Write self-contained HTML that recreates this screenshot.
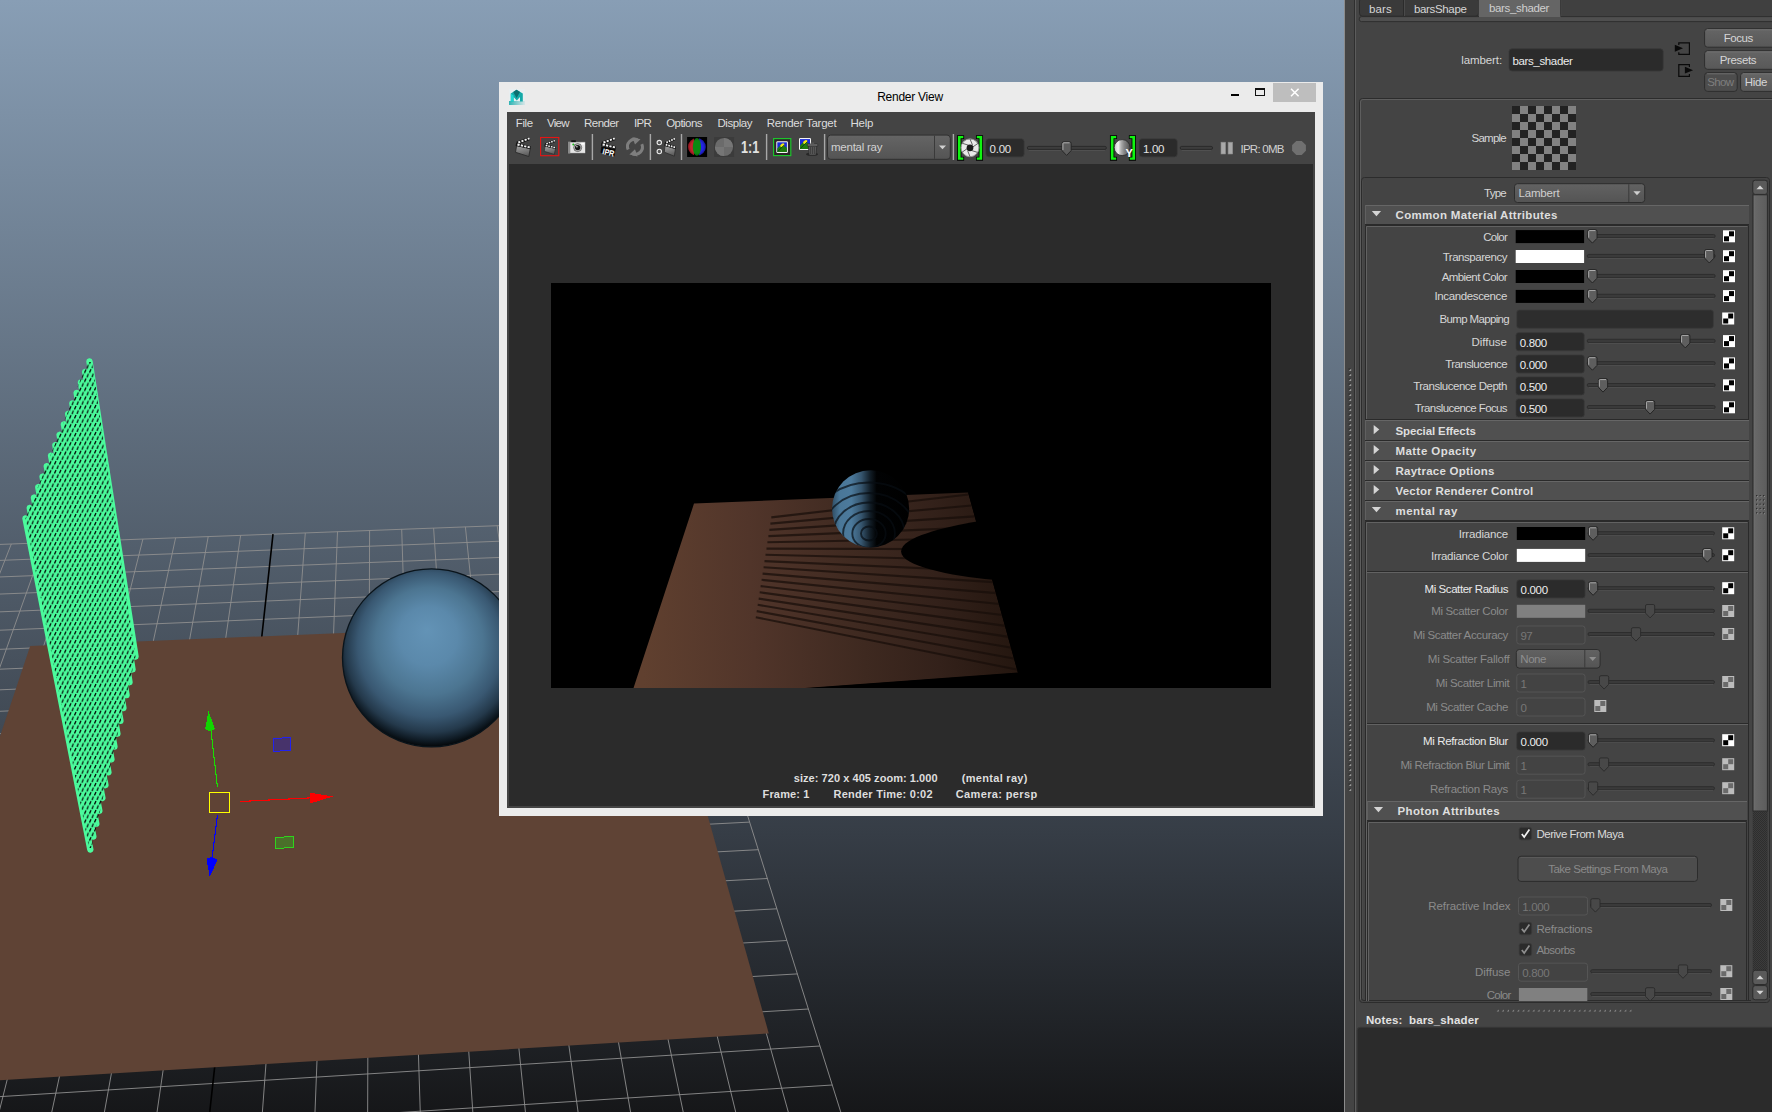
<!DOCTYPE html>
<html><head><meta charset="utf-8"><title>Render View</title>
<style>
html,body{margin:0;padding:0}
body{width:1772px;height:1112px;overflow:hidden;position:relative;background:#444;font-family:"Liberation Sans",sans-serif;font-size:11.5px}
.t{position:absolute;white-space:nowrap;font-size:11.5px;letter-spacing:-0.35px;line-height:14px;height:14px}
svg{display:block}
</style></head><body>
<svg id="vp" width="1345" height="1112" viewBox="0 0 1345 1112" style="position:absolute;left:0;top:0">
<defs>
<linearGradient id="bg" x1="0" y1="0" x2="0" y2="1"><stop offset="0" stop-color="#889eb5"/><stop offset="0.75" stop-color="#363d46"/><stop offset="1" stop-color="#161719"/></linearGradient>
<radialGradient id="sph" cx="431" cy="650" r="97.5" fx="427" fy="630" gradientUnits="userSpaceOnUse">
<stop offset="0" stop-color="#6393b6"/><stop offset="0.3" stop-color="#5b89ab"/><stop offset="0.55" stop-color="#4c7591"/><stop offset="0.74" stop-color="#395872"/><stop offset="0.87" stop-color="#24394b"/><stop offset="0.95" stop-color="#0e1922"/><stop offset="1" stop-color="#020405"/></radialGradient>
<pattern id="dash" width="5" height="9" patternUnits="userSpaceOnUse" patternTransform="skewY(-3)"><path d="M3.4,0.5L2,3.9M0.9,5L-0.5,8.4M5.9,5L4.5,8.4" stroke="#000" stroke-width="1.2"/></pattern>
<clipPath id="barclip"><polygon points="87.5,362 92,362 135.5,657 91.5,848 89,848 25.5,518.5"/></clipPath>
</defs>
<rect width="1345" height="1112" fill="url(#bg)"/>
<path d="M-121.9,549.0 L-476.6,1212.7 M-88.4,547.8 L-418.3,1208.9 M-55.1,546.5 L-360.4,1205.1 M-21.9,545.3 L-302.7,1201.3 M11.3,544.0 L-245.3,1197.6 M44.3,542.8 L-188.3,1193.8 M77.3,541.5 L-131.5,1190.1 M110.1,540.3 L-74.9,1186.4 M142.9,539.1 L-18.7,1182.7 M175.6,537.8 L37.3,1179.1 M208.2,536.6 L93.0,1175.4 M240.6,535.4 L148.4,1171.8 M305.3,533.0 L258.5,1164.6 M337.5,531.7 L313.1,1161.0 M369.6,530.5 L367.5,1157.4 M401.7,529.3 L421.6,1153.9 M433.6,528.1 L475.4,1150.4 M465.4,526.9 L529.0,1146.9 M497.2,525.7 L582.4,1143.4 M528.8,524.5 L635.4,1139.9 M560.4,523.4 L688.3,1136.4 M591.9,522.2 L740.8,1133.0 M623.3,521.0 L793.2,1129.6 M654.6,519.8 L845.2,1126.2 M-121.9,549.0 L654.6,519.8 M-130.6,565.4 L659.4,535.1 M-139.7,582.4 L664.4,551.0 M-149.1,600.0 L669.6,567.4 M-158.9,618.3 L674.9,584.4 M-169.0,637.2 L680.5,602.1 M-179.5,656.9 L686.2,620.4 M-190.5,677.4 L692.2,639.4 M-201.9,698.7 L698.4,659.1 M-213.7,720.9 L704.8,679.6 M-226.1,744.0 L711.5,701.0 M-239.0,768.1 L718.5,723.2 M-266.5,819.6 L733.4,770.5 M-281.2,847.1 L741.3,795.7 M-296.6,875.9 L749.6,822.1 M-312.7,906.1 L758.3,849.7 M-329.7,937.8 L767.4,878.5 M-347.4,971.1 L776.9,908.8 M-366.2,1006.2 L786.9,940.5 M-385.9,1043.1 L797.4,973.9 M-406.7,1082.0 L808.4,1009.0 M-428.7,1123.1 L820.0,1046.0 M-451.9,1166.6 L832.3,1085.0 M-476.6,1212.7 L845.2,1126.2" stroke="#8f8f8f" stroke-width="0.9" fill="none"/>
<path d="M273.0,534.2 L203.6,1168.2 M-252.4,793.3 L725.8,746.4" stroke="#000" stroke-width="1.6" fill="none"/>
<polygon points="30.2,646.1 652.7,619.9 768.8,1033.4 -117.6,1087.5" fill="#5f4335"/>
<ellipse cx="431.5" cy="657.8" rx="89" ry="89" fill="url(#sph)" stroke="#0a141b" stroke-width="1.3"/>
<path d="M89.5,361.5 L135.5,656.5 M85.2,372.0 L132.5,669.4 M81.0,382.4 L129.5,682.2 M76.7,392.9 L126.5,695.1 M72.4,403.4 L123.4,708.0 M68.2,413.8 L120.4,720.8 M63.9,424.3 L117.4,733.7 M59.6,434.8 L114.4,746.6 M55.4,445.2 L111.4,759.4 M51.1,455.7 L108.4,772.3 M46.8,466.2 L105.4,785.2 M42.6,476.6 L102.4,798.0 M38.3,487.1 L99.3,810.9 M34.0,497.6 L96.3,823.8 M29.8,508.0 L93.3,836.6 M25.5,518.5 L90.3,849.5" stroke="#4bfb9c" stroke-width="6.4" stroke-linecap="round" fill="none"/>
<rect x="20" y="355" width="122" height="500" fill="url(#dash)" clip-path="url(#barclip)"/>
<g fill="none" stroke-width="1.1" shape-rendering="crispEdges">
<path d="M217.4,786.7 L211,731" stroke="#19e000"/>
<path d="M208.4,711 L205.2,729 Q210,733 215,729 Z" fill="#12d400" stroke="none"/>
<path d="M240.2,801.5 L310.4,797.9" stroke="#ff0000"/>
<path d="M332.9,796.5 L310.2,792.6 L310.4,803.4 Z" fill="#ff0000" stroke="none"/>
<path d="M217.4,815 L212,859" stroke="#0000ff"/>
<path d="M209.7,876.5 L206.5,859 Q212,855 217.6,860 Z" fill="#0000ff" stroke="none"/>
<rect x="209.5" y="792.5" width="20" height="20" stroke="#ffff00" stroke-width="1"/>
<path d="M273.5,738.5 L290.5,737.5 L290.8,750.5 L274,751.3 Z" fill="#47336b" stroke="#2222ee" stroke-width="1"/>
<path d="M276,837.5 L293,836.5 L293,847.5 L275.5,848.5 Z" fill="#4a702a" stroke="#2fd41c" stroke-width="1"/>
</g>
</svg>
<div id="rv" style="position:absolute;left:499px;top:82px;width:824px;height:734px;background:#ebebeb"></div>
<div style="position:absolute;left:760px;top:89px;width:300px;height:16px;line-height:16px;text-align:center;font-size:12px;letter-spacing:-0.25px;color:#000">Render View</div>
<div style="position:absolute;left:1273px;top:83px;width:43px;height:19px;background:#bebebe"></div>
<div style="position:absolute;left:507px;top:112px;width:808px;height:696px;background:#444"></div>
<div style="position:absolute;left:509px;top:164px;width:804px;height:642px;background:#2b2b2b"></div>
<div class="t" style="left:515.8px;top:116px;color:#dcdcdc;letter-spacing:-0.43px;">File</div>
<div class="t" style="left:547.1px;top:116px;color:#dcdcdc;letter-spacing:-0.75px;">View</div>
<div class="t" style="left:584.0px;top:116px;color:#dcdcdc;letter-spacing:-0.52px;">Render</div>
<div class="t" style="left:634.1px;top:116px;color:#dcdcdc;letter-spacing:-0.75px;">IPR</div>
<div class="t" style="left:666.2px;top:116px;color:#dcdcdc;letter-spacing:-0.55px;">Options</div>
<div class="t" style="left:717.5px;top:116px;color:#dcdcdc;letter-spacing:-0.45px;">Display</div>
<div class="t" style="left:766.8px;top:116px;color:#dcdcdc;letter-spacing:-0.23px;">Render Target</div>
<div class="t" style="left:850.6px;top:116px;color:#dcdcdc;letter-spacing:-0.30px;">Help</div>
<svg width="824" height="734" viewBox="499 82 824 734" style="position:absolute;left:499px;top:82px">
<defs>
<linearGradient id="clg" x1="0" y1="0" x2="0.3" y2="1"><stop offset="0" stop-color="#a4a4a4"/><stop offset="1" stop-color="#5e5e5e"/></linearGradient>
<linearGradient id="pl" x1="640" y1="590" x2="1010" y2="575" gradientUnits="userSpaceOnUse"><stop offset="0" stop-color="#60402f"/><stop offset="0.3" stop-color="#51352a"/><stop offset="0.6" stop-color="#3e2920"/><stop offset="0.8" stop-color="#33211a"/><stop offset="1" stop-color="#251710"/></linearGradient>
<linearGradient id="sp2" x1="832" y1="0" x2="909" y2="0" gradientUnits="userSpaceOnUse"><stop offset="0" stop-color="#2f4d64"/><stop offset="0.1" stop-color="#4a7798"/><stop offset="0.25" stop-color="#4c7a9c"/><stop offset="0.38" stop-color="#36566f"/><stop offset="0.5" stop-color="#111c25"/><stop offset="0.58" stop-color="#010203"/><stop offset="1" stop-color="#000"/></linearGradient>
<radialGradient id="rgbsh" cx="0.5" cy="0.5" r="0.5"><stop offset="0.7" stop-color="#000" stop-opacity="0"/><stop offset="1" stop-color="#000" stop-opacity="0.32"/></radialGradient>
<linearGradient id="ddg" x1="0" y1="0" x2="0" y2="1"><stop offset="0" stop-color="#656565"/><stop offset="1" stop-color="#545454"/></linearGradient>
<linearGradient id="ysp" x1="0" y1="0" x2="1" y2="0"><stop offset="0" stop-color="#c4c4c4"/><stop offset="0.25" stop-color="#f2f2f2"/><stop offset="0.42" stop-color="#b0b0b0"/><stop offset="0.62" stop-color="#868686"/><stop offset="0.82" stop-color="#6a6a6a"/><stop offset="1" stop-color="#474747"/></linearGradient>
<linearGradient id="tig" x1="0" y1="0" x2="1" y2="0"><stop offset="0" stop-color="#2fb3b3"/><stop offset="1" stop-color="#d8e6e8"/></linearGradient>
<clipPath id="ballc"><circle cx="696.9" cy="146.9" r="8.8"/></clipPath>
<clipPath id="sphc"><circle cx="870.6" cy="508.8" r="38.6"/></clipPath>
<clipPath id="imgc"><rect x="551" y="283" width="720" height="405"/></clipPath>
</defs>
<g><rect x="509" y="89" width="16" height="16" fill="#e8eef0"/><rect x="509" y="101" width="16" height="4" fill="url(#tig)"/>
<path d="M510.8,101.5 L510.8,93.5 L516.5,89.8 L522.8,93.5 L522.8,101.5 L520,101.5 L520,97 L516.8,100.5 L513.6,97 L513.6,101.5 Z" fill="#14a9a8"/>
<path d="M510.8,93.5 L513.6,95.5 L513.6,101.5 L510.8,101.5 Z" fill="#22d6d2"/>
<path d="M513.3,92 L516.6,98 L520,92 L516.5,89.8 Z" fill="#0b6f70"/></g>
<rect x="1231" y="94" width="8" height="2" fill="#000"/>
<path d="M1255,88 h10 v8 h-10 Z M1256,90 v5 h8 v-5 Z" fill="#111" fill-rule="evenodd"/>
<path d="M1291,88.7 L1298.6,96.3 M1298.6,88.7 L1291,96.3" stroke="#fff" stroke-width="1.5"/>
<g transform="translate(515.2,136.9) scale(1.0)">
<path d="M1.4,8.8 L15.2,11.2 L13.6,19.6 L0.3,15.4 Z" fill="url(#clg)" stroke="#2a2a2a" stroke-width="0.9"/>
<path d="M1.2,4.9 L14,0.2 L15,3 L2.2,7.6 Z" fill="#151515"/>
<path d="M1,5.8 L15.6,9.4 L15,12.3 L0.4,8.8 Z" fill="#151515"/>
<g fill="#f4f4f4"><rect x="3" y="4.3" width="2.1" height="1.9" transform="rotate(-20 4 5.2)"/><rect x="6.2" y="3.1" width="2.1" height="1.9" transform="rotate(-20 7.2 4)"/><rect x="9.4" y="1.9" width="2.1" height="1.9" transform="rotate(-20 10.4 2.8)"/><rect x="12.5" y="0.8" width="1.9" height="1.9" transform="rotate(-20 13.4 1.7)"/>
<rect x="2.2" y="6.9" width="2.2" height="1.9" transform="rotate(14 3.3 7.8)"/><rect x="5.6" y="7.7" width="2.2" height="1.9" transform="rotate(14 6.7 8.6)"/><rect x="9" y="8.5" width="2.2" height="1.9" transform="rotate(14 10.1 9.4)"/><rect x="12.4" y="9.3" width="2.2" height="1.9" transform="rotate(14 13.4 10.2)"/></g>
</g>
<rect x="540.6" y="137.5" width="18.2" height="18.2" fill="none" stroke="#e61414" stroke-width="1.1"/>
<g transform="translate(544,139.6) scale(0.76)">
<path d="M1.4,8.8 L15.2,11.2 L13.6,19.6 L0.3,15.4 Z" fill="url(#clg)" stroke="#2a2a2a" stroke-width="0.9"/>
<path d="M1.2,4.9 L14,0.2 L15,3 L2.2,7.6 Z" fill="#151515"/>
<path d="M1,5.8 L15.6,9.4 L15,12.3 L0.4,8.8 Z" fill="#151515"/>
<g fill="#f4f4f4"><rect x="3" y="4.3" width="2.1" height="1.9" transform="rotate(-20 4 5.2)"/><rect x="6.2" y="3.1" width="2.1" height="1.9" transform="rotate(-20 7.2 4)"/><rect x="9.4" y="1.9" width="2.1" height="1.9" transform="rotate(-20 10.4 2.8)"/><rect x="12.5" y="0.8" width="1.9" height="1.9" transform="rotate(-20 13.4 1.7)"/>
<rect x="2.2" y="6.9" width="2.2" height="1.9" transform="rotate(14 3.3 7.8)"/><rect x="5.6" y="7.7" width="2.2" height="1.9" transform="rotate(14 6.7 8.6)"/><rect x="9" y="8.5" width="2.2" height="1.9" transform="rotate(14 10.1 9.4)"/><rect x="12.4" y="9.3" width="2.2" height="1.9" transform="rotate(14 13.4 10.2)"/></g>
</g>
<g><rect x="568" y="141.8" width="17.6" height="11.6" rx="0.8" fill="#e6e6e6" stroke="#3a3a3a" stroke-width="0.7"/>
<rect x="568" y="141.8" width="2.3" height="11.6" fill="#8a8a8a"/><rect x="571.3" y="140.3" width="4.5" height="1.8" fill="#111"/>
<rect x="581.2" y="142.8" width="3" height="1.8" fill="#fff"/>
<circle cx="577.7" cy="147.6" r="4" fill="#bdbdbd" stroke="#333" stroke-width="0.6"/><circle cx="577.7" cy="147.6" r="2.7" fill="#151515"/><circle cx="576.9" cy="146.8" r="0.8" fill="#ddd"/>
<circle cx="573.3" cy="144.4" r="1" fill="#19b819"/></g>
<rect x="591.6999999999999" y="134" width="1.4" height="26" fill="#a8a8a8"/>
<rect x="649.6999999999999" y="134" width="1.4" height="26" fill="#a8a8a8"/>
<rect x="680.8" y="134" width="1.4" height="26" fill="#a8a8a8"/>
<rect x="765.9" y="134" width="1.4" height="26" fill="#a8a8a8"/>
<rect x="823.9" y="134" width="1.4" height="26" fill="#a8a8a8"/>
<rect x="952.6999999999999" y="134" width="1.4" height="26" fill="#a8a8a8"/>
<g transform="translate(600.4,136.9) scale(1.0)">
<path d="M1.4,8.8 L15.2,11.2 L13.6,19.6 L0.3,15.4 Z" fill="url(#clg)" stroke="#2a2a2a" stroke-width="0.9"/>
<path d="M1.2,4.9 L14,0.2 L15,3 L2.2,7.6 Z" fill="#151515"/>
<path d="M1,5.8 L15.6,9.4 L15,12.3 L0.4,8.8 Z" fill="#151515"/>
<g fill="#f4f4f4"><rect x="3" y="4.3" width="2.1" height="1.9" transform="rotate(-20 4 5.2)"/><rect x="6.2" y="3.1" width="2.1" height="1.9" transform="rotate(-20 7.2 4)"/><rect x="9.4" y="1.9" width="2.1" height="1.9" transform="rotate(-20 10.4 2.8)"/><rect x="12.5" y="0.8" width="1.9" height="1.9" transform="rotate(-20 13.4 1.7)"/>
<rect x="2.2" y="6.9" width="2.2" height="1.9" transform="rotate(14 3.3 7.8)"/><rect x="5.6" y="7.7" width="2.2" height="1.9" transform="rotate(14 6.7 8.6)"/><rect x="9" y="8.5" width="2.2" height="1.9" transform="rotate(14 10.1 9.4)"/><rect x="12.4" y="9.3" width="2.2" height="1.9" transform="rotate(14 13.4 10.2)"/></g>
</g>
<path d="M601.6,146.2 L615.4,149 L614.2,156.6 L600.6,152.8 Z" fill="#080808"/>
<text x="602" y="154" font-family="Liberation Sans, sans-serif" font-weight="bold" font-size="8.4" fill="#fff" transform="rotate(13 602 154)" textLength="12" lengthAdjust="spacingAndGlyphs">IPR</text>
<g fill="none" stroke="#7e7e7e" stroke-width="3"><path d="M628.2,149.5 A7.2,7.2 0 0 1 637.5,139.8"/><path d="M641.8,144.2 A7.2,7.2 0 0 1 632.5,153.8"/></g>
<path d="M632.3,137.2 L640.5,139.2 L635,144.5 Z" fill="#7e7e7e"/><path d="M637.6,156.5 L629.4,154.6 L635,149.2 Z" fill="#7e7e7e"/>
<circle cx="659.3" cy="142.6" r="2.2" fill="#555" stroke="#ececec" stroke-width="1.1"/><circle cx="659.3" cy="151.5" r="2.2" fill="#555" stroke="#ececec" stroke-width="1.1"/>
<g transform="translate(664,137.2) scale(0.76,0.97)">
<path d="M1.4,8.8 L15.2,11.2 L13.6,19.6 L0.3,15.4 Z" fill="url(#clg)" stroke="#2a2a2a" stroke-width="0.9"/>
<path d="M1.2,4.9 L14,0.2 L15,3 L2.2,7.6 Z" fill="#151515"/>
<path d="M1,5.8 L15.6,9.4 L15,12.3 L0.4,8.8 Z" fill="#151515"/>
<g fill="#f4f4f4"><rect x="3" y="4.3" width="2.1" height="1.9" transform="rotate(-20 4 5.2)"/><rect x="6.2" y="3.1" width="2.1" height="1.9" transform="rotate(-20 7.2 4)"/><rect x="9.4" y="1.9" width="2.1" height="1.9" transform="rotate(-20 10.4 2.8)"/><rect x="12.5" y="0.8" width="1.9" height="1.9" transform="rotate(-20 13.4 1.7)"/>
<rect x="2.2" y="6.9" width="2.2" height="1.9" transform="rotate(14 3.3 7.8)"/><rect x="5.6" y="7.7" width="2.2" height="1.9" transform="rotate(14 6.7 8.6)"/><rect x="9" y="8.5" width="2.2" height="1.9" transform="rotate(14 10.1 9.4)"/><rect x="12.4" y="9.3" width="2.2" height="1.9" transform="rotate(14 13.4 10.2)"/></g>
</g>
<rect x="687.1" y="137" width="20" height="20" fill="#000"/><g clip-path="url(#ballc)"><rect x="687" y="137" width="7" height="20" fill="#c5222c"/><rect x="699" y="137" width="8" height="20" fill="#2424e4"/><ellipse cx="696.9" cy="146.9" rx="4.1" ry="9" fill="#0b8a12"/><circle cx="696.9" cy="146.9" r="8.8" fill="url(#rgbsh)"/></g>
<rect x="714.1" y="137.1" width="20" height="19.8" fill="#3b3b3b"/><circle cx="724" cy="147" r="9.1" fill="#6b6b6b"/><path d="M724,147 L724,137.9 A9.1,9.1 0 0 1 733.1,147 Z M724,147 L724,156.1 A9.1,9.1 0 0 1 714.9,147 Z" fill="#767676"/>
<text x="741" y="153" font-family="Liberation Sans, sans-serif" font-weight="bold" font-size="16.5" fill="#e2e2e2" textLength="18.2" lengthAdjust="spacingAndGlyphs">1:1</text>
<rect x="773.6" y="138.6" width="17.2" height="17" fill="#2c2428" stroke="#1dc32b" stroke-width="1.2"/>
<g transform="translate(776.3,141.3)"><rect x="0" y="0" width="11.6" height="11.6" rx="1.2" fill="#f4f4f4"/><rect x="1" y="1" width="9.6" height="9.6" fill="#1a2ad8"/><path d="M1,10.6 L1,7.192 L5.22,2.9 L10.6,6.38 L10.6,10.6 Z" fill="#1f7a10"/><ellipse cx="6.032" cy="3.828" rx="2.32" ry="1.508" fill="#f0e814" transform="rotate(-35 6.032 3.828)"/><path d="M1.5,10.1 L8.12,3.48" stroke="#0c3a08" stroke-width="0.8"/></g>
<g transform="translate(799,138.1)"><rect x="0" y="0" width="12" height="11.8" rx="1.2" fill="#f4f4f4"/><rect x="1" y="1" width="10" height="9.8" fill="#1a2ad8"/><path d="M1,10.8 L1,7.316000000000001 L5.4,2.95 L11,6.490000000000001 L11,10.8 Z" fill="#1f7a10"/><ellipse cx="6.24" cy="3.8940000000000006" rx="2.4000000000000004" ry="1.5340000000000003" fill="#f0e814" transform="rotate(-35 6.24 3.8940000000000006)"/><path d="M1.5,10.3 L8.399999999999999,3.54" stroke="#0c3a08" stroke-width="0.8"/></g>
<g><ellipse cx="812" cy="154.3" rx="6" ry="1.8" fill="#262626"/><path d="M808.3,145.8 L816.8,145.8 L816,155.2 L809.1,155.2 Z" fill="#5a5a5a" stroke="#2a2a2a" stroke-width="0.7"/><rect x="807.2" y="143.9" width="10.7" height="2.2" rx="1" fill="#6e6e6e" stroke="#2a2a2a" stroke-width="0.6"/><rect x="810.8" y="142.4" width="3.4" height="1.6" fill="#555"/><path d="M810.6,147 V154 M812.5,147 V154 M814.4,147 V154" stroke="#333" stroke-width="0.7"/></g>
<rect x="827.5" y="135.1" width="122.8" height="24.2" rx="3.2" fill="url(#ddg)" stroke="#303030" stroke-width="1"/><path d="M934.5,135.6 V158.8" stroke="#3a3a3a" stroke-width="1"/><path d="M939,145.4 L946,145.4 L942.5,149.2 Z" fill="#d0d0d0"/>
<path d="M957.9,136 h5.4 v2.2 h-2.7 v19.4 h2.7 v2.2 h-5.4 Z M982.2,136 h-5.4 v2.2 h2.7 v19.4 h-2.7 v2.2 h5.4 Z" fill="#10f510" stroke="#000" stroke-width="1.7" paint-order="stroke" stroke-linejoin="miter"/>
<circle cx="970" cy="147.8" r="8.9" fill="#e9e9e9"/><circle cx="970" cy="147.8" r="8.9" fill="none" stroke="#9a9a9a" stroke-width="1"/>
<g stroke="#555" stroke-width="0.9"><path d="M970,139 L972.5,145"/><path d="M977.8,143.5 L972.8,147"/><path d="M977.6,152.4 L971.5,150.5"/><path d="M970,156.6 L967.6,150.6"/><path d="M962.2,152.2 L967.2,148.6"/><path d="M962.4,143.3 L968.5,145.2"/></g>
<circle cx="970" cy="147.8" r="3.4" fill="#1a1a1a"/>
<path d="M1110.8000000000002,136 h5.4 v2.2 h-2.7 v19.4 h2.7 v2.2 h-5.4 Z M1135.1000000000001,136 h-5.4 v2.2 h2.7 v19.4 h-2.7 v2.2 h5.4 Z" fill="#10f510" stroke="#000" stroke-width="1.7" paint-order="stroke" stroke-linejoin="miter"/>
<circle cx="1122.2" cy="147.6" r="8" fill="url(#ysp)" stroke="#262626" stroke-width="0.8"/>
<text x="1125.4" y="156.6" font-family="Liberation Sans, sans-serif" font-weight="bold" font-size="11" fill="#fff">Y</text>
<rect x="985.8" y="138.7" width="38.4" height="18.2" rx="3" fill="#2b2b2b" stroke="#3c3c3c" stroke-width="0.8"/>
<rect x="1139.1" y="138.7" width="38.2" height="18.2" rx="3" fill="#2b2b2b" stroke="#3c3c3c" stroke-width="0.8"/>
<rect x="1027.3" y="146.4" width="79.10000000000014" height="3" rx="1.5" fill="#3d3d3d" stroke="#272727" stroke-width="0.9"/><rect x="1028.8" y="150" width="76.10000000000014" height="0.7" fill="#565656"/>
<rect x="1180.2" y="146.4" width="32.399999999999864" height="3" rx="1.5" fill="#3d3d3d" stroke="#272727" stroke-width="0.9"/><rect x="1181.7" y="150" width="29.399999999999864" height="0.7" fill="#565656"/>
<path d="M1062,143.4 Q1062,141.9 1063.5,141.9 L1069.7,141.9 Q1071.2,141.9 1071.2,143.4 L1071.2,150.6 L1066.6,155.4 L1062,150.6 Z" fill="#5c5c5c" stroke="#222" stroke-width="0.9"/><path d="M1062.9,150 V143.6 Q1062.9,142.8 1063.8,142.8 H1069.6" fill="none" stroke="#bdbdbd" stroke-width="0.9"/>
<rect x="1221" y="142.2" width="4.6" height="11.8" fill="#a9a9a9" stroke="#8a8a8a" stroke-width="0.6"/><rect x="1228.1" y="142.2" width="4.6" height="11.8" fill="#a9a9a9" stroke="#8a8a8a" stroke-width="0.6"/>
<path d="M1296.3,141 L1301.7,141 L1305.9,145.1 L1305.9,150.7 L1301.7,154.9 L1296.3,154.9 L1292.1,150.7 L1292.1,145.1 Z" fill="#707070"/>
<rect x="551" y="283" width="720" height="405" fill="#000"/>
<g clip-path="url(#imgc)">
<path d="M694,503.6 L968.1,492.4 L992,579.4 L1018,672.9 L797,689 L633.2,689 Z" fill="url(#pl)"/>
<path d="M771.3,517.4 L968.6,494.5 M770.4,523.6 L971.7,505.5 M769.4,529.9 L974.8,516.4 M768.4,536.1 L977.9,527.4 M767.4,542.3 L981.0,538.3 M766.5,548.6 L984.1,549.3 M765.5,554.8 L987.1,560.2 M764.5,561.1 L990.2,571.2 M763.6,567.3 L993.3,582.1 M762.6,573.6 L996.4,593.1 M761.6,579.8 L999.5,604.0 M760.6,586.1 L1002.6,615.0 M759.7,592.3 L1005.6,625.9 M758.7,598.6 L1008.7,636.9 M757.7,604.8 L1011.8,647.8 M756.7,611.1 L1014.9,658.8 M755.8,617.3 L1018.0,669.8" stroke="#180e0a" stroke-opacity="0.72" stroke-width="2.1" fill="none"/>
<path d="M968.1,492.4 L1018,672.9 L1018,689 L1100,689 L1100,480 Z" fill="#000"/>
<path d="M797,688.6 L1018,672.6 L1030,690 Z" fill="#000"/>
<path d="M977,521.5 C945,527 901,537 901.1,551.6 C901.2,566 950,576 993,579.8 L1000,560 Z" fill="#000"/>
<circle cx="870.6" cy="508.8" r="38.6" fill="url(#sp2)"/>
<g clip-path="url(#sphc)" fill="none" stroke="#070d12" stroke-opacity="0.7" stroke-width="1.9">
<ellipse cx="869" cy="533.5" rx="8.0" ry="7.0"/>
<ellipse cx="869" cy="533.5" rx="16.7" ry="14.5"/>
<ellipse cx="869" cy="533.5" rx="25.9" ry="22.5"/>
<ellipse cx="869" cy="533.5" rx="35.6" ry="31.0"/>
<ellipse cx="869" cy="533.5" rx="46.6" ry="40.5"/>
<ellipse cx="869" cy="533.5" rx="58.6" ry="51.0"/>
</g>
</g>
</svg>
<div class="t" style="left:831px;top:140px;color:#d2d2d2;letter-spacing:-0.24px;">mental ray</div>
<div class="t" style="left:989.5px;top:142px;color:#e4e4e4;letter-spacing:-0.23px;">0.00</div>
<div class="t" style="left:1143px;top:142px;color:#e4e4e4;letter-spacing:-0.30px;">1.00</div>
<div class="t" style="left:1240.5px;top:142px;color:#d0d0d0;letter-spacing:-0.75px;">IPR: 0MB</div>
<div class="t" style="left:793.8px;top:771px;font-weight:bold;font-size:11px;color:#dedede;white-space:pre;letter-spacing:0.05px;">size: 720 x 405 zoom: 1.000</div>
<div class="t" style="left:961.8px;top:771px;font-weight:bold;font-size:11px;color:#dedede;white-space:pre;letter-spacing:0.30px;">(mental ray)</div>
<div class="t" style="left:762.6px;top:787px;font-weight:bold;font-size:11px;color:#dedede;white-space:pre;letter-spacing:0.14px;">Frame: 1</div>
<div class="t" style="left:833.5px;top:787px;font-weight:bold;font-size:11px;color:#dedede;white-space:pre;letter-spacing:0.24px;">Render Time: 0:02</div>
<div class="t" style="left:955.8px;top:787px;font-weight:bold;font-size:11px;color:#dedede;white-space:pre;letter-spacing:0.36px;">Camera: persp</div>
<div style="position:absolute;left:1345px;top:0;width:427px;height:1112px;background:#444"></div>
<svg width="432" height="1112" viewBox="1340 0 432 1112" style="position:absolute;left:1340px;top:0"><defs><linearGradient id="thg" x1="0" y1="0" x2="1" y2="0"><stop offset="0" stop-color="#6a6a6a"/><stop offset="1" stop-color="#5c5c5c"/></linearGradient><linearGradient id="btg" x1="0" y1="0" x2="0" y2="1"><stop offset="0" stop-color="#656565"/><stop offset="1" stop-color="#585858"/></linearGradient><linearGradient id="ddg2" x1="0" y1="0" x2="0" y2="1"><stop offset="0" stop-color="#626262"/><stop offset="1" stop-color="#545454"/></linearGradient><pattern id="hatch" width="2" height="2" patternUnits="userSpaceOnUse"><rect width="2" height="2" fill="#3c3c3c"/><rect width="1" height="1" fill="#2e2e2e"/><rect x="1" y="1" width="1" height="1" fill="#2e2e2e"/></pattern></defs><rect x="1344" y="0" width="1" height="1112" fill="#8c8c8c" />
<rect x="1354" y="0" width="1" height="1112" fill="#2f2f2f" />
<rect x="1355" y="0" width="1" height="1112" fill="#5c5c5c" />
<path d="M1348.4,368 h2.6 v2.6 h-2.6 Z" fill="#383838"/><path d="M1351.2,368.6 v2.4 h-2.4 Z" fill="#9a9a9a"/>
<path d="M1348.4,373 h2.6 v2.6 h-2.6 Z" fill="#383838"/><path d="M1351.2,373.6 v2.4 h-2.4 Z" fill="#9a9a9a"/>
<path d="M1348.4,378 h2.6 v2.6 h-2.6 Z" fill="#383838"/><path d="M1351.2,378.6 v2.4 h-2.4 Z" fill="#9a9a9a"/>
<path d="M1348.4,383 h2.6 v2.6 h-2.6 Z" fill="#383838"/><path d="M1351.2,383.6 v2.4 h-2.4 Z" fill="#9a9a9a"/>
<path d="M1348.4,388 h2.6 v2.6 h-2.6 Z" fill="#383838"/><path d="M1351.2,388.6 v2.4 h-2.4 Z" fill="#9a9a9a"/>
<path d="M1348.4,393 h2.6 v2.6 h-2.6 Z" fill="#383838"/><path d="M1351.2,393.6 v2.4 h-2.4 Z" fill="#9a9a9a"/>
<path d="M1348.4,398 h2.6 v2.6 h-2.6 Z" fill="#383838"/><path d="M1351.2,398.6 v2.4 h-2.4 Z" fill="#9a9a9a"/>
<path d="M1348.4,403 h2.6 v2.6 h-2.6 Z" fill="#383838"/><path d="M1351.2,403.6 v2.4 h-2.4 Z" fill="#9a9a9a"/>
<path d="M1348.4,408 h2.6 v2.6 h-2.6 Z" fill="#383838"/><path d="M1351.2,408.6 v2.4 h-2.4 Z" fill="#9a9a9a"/>
<path d="M1348.4,413 h2.6 v2.6 h-2.6 Z" fill="#383838"/><path d="M1351.2,413.6 v2.4 h-2.4 Z" fill="#9a9a9a"/>
<path d="M1348.4,418 h2.6 v2.6 h-2.6 Z" fill="#383838"/><path d="M1351.2,418.6 v2.4 h-2.4 Z" fill="#9a9a9a"/>
<path d="M1348.4,423 h2.6 v2.6 h-2.6 Z" fill="#383838"/><path d="M1351.2,423.6 v2.4 h-2.4 Z" fill="#9a9a9a"/>
<path d="M1348.4,428 h2.6 v2.6 h-2.6 Z" fill="#383838"/><path d="M1351.2,428.6 v2.4 h-2.4 Z" fill="#9a9a9a"/>
<path d="M1348.4,433 h2.6 v2.6 h-2.6 Z" fill="#383838"/><path d="M1351.2,433.6 v2.4 h-2.4 Z" fill="#9a9a9a"/>
<path d="M1348.4,438 h2.6 v2.6 h-2.6 Z" fill="#383838"/><path d="M1351.2,438.6 v2.4 h-2.4 Z" fill="#9a9a9a"/>
<path d="M1348.4,443 h2.6 v2.6 h-2.6 Z" fill="#383838"/><path d="M1351.2,443.6 v2.4 h-2.4 Z" fill="#9a9a9a"/>
<path d="M1348.4,448 h2.6 v2.6 h-2.6 Z" fill="#383838"/><path d="M1351.2,448.6 v2.4 h-2.4 Z" fill="#9a9a9a"/>
<path d="M1348.4,453 h2.6 v2.6 h-2.6 Z" fill="#383838"/><path d="M1351.2,453.6 v2.4 h-2.4 Z" fill="#9a9a9a"/>
<path d="M1348.4,458 h2.6 v2.6 h-2.6 Z" fill="#383838"/><path d="M1351.2,458.6 v2.4 h-2.4 Z" fill="#9a9a9a"/>
<path d="M1348.4,463 h2.6 v2.6 h-2.6 Z" fill="#383838"/><path d="M1351.2,463.6 v2.4 h-2.4 Z" fill="#9a9a9a"/>
<path d="M1348.4,468 h2.6 v2.6 h-2.6 Z" fill="#383838"/><path d="M1351.2,468.6 v2.4 h-2.4 Z" fill="#9a9a9a"/>
<path d="M1348.4,473 h2.6 v2.6 h-2.6 Z" fill="#383838"/><path d="M1351.2,473.6 v2.4 h-2.4 Z" fill="#9a9a9a"/>
<path d="M1348.4,478 h2.6 v2.6 h-2.6 Z" fill="#383838"/><path d="M1351.2,478.6 v2.4 h-2.4 Z" fill="#9a9a9a"/>
<path d="M1348.4,483 h2.6 v2.6 h-2.6 Z" fill="#383838"/><path d="M1351.2,483.6 v2.4 h-2.4 Z" fill="#9a9a9a"/>
<path d="M1348.4,488 h2.6 v2.6 h-2.6 Z" fill="#383838"/><path d="M1351.2,488.6 v2.4 h-2.4 Z" fill="#9a9a9a"/>
<path d="M1348.4,493 h2.6 v2.6 h-2.6 Z" fill="#383838"/><path d="M1351.2,493.6 v2.4 h-2.4 Z" fill="#9a9a9a"/>
<path d="M1348.4,498 h2.6 v2.6 h-2.6 Z" fill="#383838"/><path d="M1351.2,498.6 v2.4 h-2.4 Z" fill="#9a9a9a"/>
<path d="M1348.4,503 h2.6 v2.6 h-2.6 Z" fill="#383838"/><path d="M1351.2,503.6 v2.4 h-2.4 Z" fill="#9a9a9a"/>
<path d="M1348.4,508 h2.6 v2.6 h-2.6 Z" fill="#383838"/><path d="M1351.2,508.6 v2.4 h-2.4 Z" fill="#9a9a9a"/>
<path d="M1348.4,513 h2.6 v2.6 h-2.6 Z" fill="#383838"/><path d="M1351.2,513.6 v2.4 h-2.4 Z" fill="#9a9a9a"/>
<path d="M1348.4,518 h2.6 v2.6 h-2.6 Z" fill="#383838"/><path d="M1351.2,518.6 v2.4 h-2.4 Z" fill="#9a9a9a"/>
<path d="M1348.4,523 h2.6 v2.6 h-2.6 Z" fill="#383838"/><path d="M1351.2,523.6 v2.4 h-2.4 Z" fill="#9a9a9a"/>
<path d="M1348.4,528 h2.6 v2.6 h-2.6 Z" fill="#383838"/><path d="M1351.2,528.6 v2.4 h-2.4 Z" fill="#9a9a9a"/>
<path d="M1348.4,533 h2.6 v2.6 h-2.6 Z" fill="#383838"/><path d="M1351.2,533.6 v2.4 h-2.4 Z" fill="#9a9a9a"/>
<path d="M1348.4,538 h2.6 v2.6 h-2.6 Z" fill="#383838"/><path d="M1351.2,538.6 v2.4 h-2.4 Z" fill="#9a9a9a"/>
<path d="M1348.4,543 h2.6 v2.6 h-2.6 Z" fill="#383838"/><path d="M1351.2,543.6 v2.4 h-2.4 Z" fill="#9a9a9a"/>
<path d="M1348.4,548 h2.6 v2.6 h-2.6 Z" fill="#383838"/><path d="M1351.2,548.6 v2.4 h-2.4 Z" fill="#9a9a9a"/>
<path d="M1348.4,553 h2.6 v2.6 h-2.6 Z" fill="#383838"/><path d="M1351.2,553.6 v2.4 h-2.4 Z" fill="#9a9a9a"/>
<path d="M1348.4,558 h2.6 v2.6 h-2.6 Z" fill="#383838"/><path d="M1351.2,558.6 v2.4 h-2.4 Z" fill="#9a9a9a"/>
<path d="M1348.4,563 h2.6 v2.6 h-2.6 Z" fill="#383838"/><path d="M1351.2,563.6 v2.4 h-2.4 Z" fill="#9a9a9a"/>
<path d="M1348.4,568 h2.6 v2.6 h-2.6 Z" fill="#383838"/><path d="M1351.2,568.6 v2.4 h-2.4 Z" fill="#9a9a9a"/>
<path d="M1348.4,573 h2.6 v2.6 h-2.6 Z" fill="#383838"/><path d="M1351.2,573.6 v2.4 h-2.4 Z" fill="#9a9a9a"/>
<path d="M1348.4,578 h2.6 v2.6 h-2.6 Z" fill="#383838"/><path d="M1351.2,578.6 v2.4 h-2.4 Z" fill="#9a9a9a"/>
<path d="M1348.4,583 h2.6 v2.6 h-2.6 Z" fill="#383838"/><path d="M1351.2,583.6 v2.4 h-2.4 Z" fill="#9a9a9a"/>
<path d="M1348.4,588 h2.6 v2.6 h-2.6 Z" fill="#383838"/><path d="M1351.2,588.6 v2.4 h-2.4 Z" fill="#9a9a9a"/>
<path d="M1348.4,593 h2.6 v2.6 h-2.6 Z" fill="#383838"/><path d="M1351.2,593.6 v2.4 h-2.4 Z" fill="#9a9a9a"/>
<path d="M1348.4,598 h2.6 v2.6 h-2.6 Z" fill="#383838"/><path d="M1351.2,598.6 v2.4 h-2.4 Z" fill="#9a9a9a"/>
<path d="M1348.4,603 h2.6 v2.6 h-2.6 Z" fill="#383838"/><path d="M1351.2,603.6 v2.4 h-2.4 Z" fill="#9a9a9a"/>
<path d="M1348.4,608 h2.6 v2.6 h-2.6 Z" fill="#383838"/><path d="M1351.2,608.6 v2.4 h-2.4 Z" fill="#9a9a9a"/>
<path d="M1348.4,613 h2.6 v2.6 h-2.6 Z" fill="#383838"/><path d="M1351.2,613.6 v2.4 h-2.4 Z" fill="#9a9a9a"/>
<path d="M1348.4,618 h2.6 v2.6 h-2.6 Z" fill="#383838"/><path d="M1351.2,618.6 v2.4 h-2.4 Z" fill="#9a9a9a"/>
<path d="M1348.4,623 h2.6 v2.6 h-2.6 Z" fill="#383838"/><path d="M1351.2,623.6 v2.4 h-2.4 Z" fill="#9a9a9a"/>
<path d="M1348.4,628 h2.6 v2.6 h-2.6 Z" fill="#383838"/><path d="M1351.2,628.6 v2.4 h-2.4 Z" fill="#9a9a9a"/>
<path d="M1348.4,633 h2.6 v2.6 h-2.6 Z" fill="#383838"/><path d="M1351.2,633.6 v2.4 h-2.4 Z" fill="#9a9a9a"/>
<path d="M1348.4,638 h2.6 v2.6 h-2.6 Z" fill="#383838"/><path d="M1351.2,638.6 v2.4 h-2.4 Z" fill="#9a9a9a"/>
<path d="M1348.4,643 h2.6 v2.6 h-2.6 Z" fill="#383838"/><path d="M1351.2,643.6 v2.4 h-2.4 Z" fill="#9a9a9a"/>
<path d="M1348.4,648 h2.6 v2.6 h-2.6 Z" fill="#383838"/><path d="M1351.2,648.6 v2.4 h-2.4 Z" fill="#9a9a9a"/>
<path d="M1348.4,653 h2.6 v2.6 h-2.6 Z" fill="#383838"/><path d="M1351.2,653.6 v2.4 h-2.4 Z" fill="#9a9a9a"/>
<path d="M1348.4,658 h2.6 v2.6 h-2.6 Z" fill="#383838"/><path d="M1351.2,658.6 v2.4 h-2.4 Z" fill="#9a9a9a"/>
<path d="M1348.4,663 h2.6 v2.6 h-2.6 Z" fill="#383838"/><path d="M1351.2,663.6 v2.4 h-2.4 Z" fill="#9a9a9a"/>
<path d="M1348.4,668 h2.6 v2.6 h-2.6 Z" fill="#383838"/><path d="M1351.2,668.6 v2.4 h-2.4 Z" fill="#9a9a9a"/>
<path d="M1348.4,673 h2.6 v2.6 h-2.6 Z" fill="#383838"/><path d="M1351.2,673.6 v2.4 h-2.4 Z" fill="#9a9a9a"/>
<path d="M1348.4,678 h2.6 v2.6 h-2.6 Z" fill="#383838"/><path d="M1351.2,678.6 v2.4 h-2.4 Z" fill="#9a9a9a"/>
<path d="M1348.4,683 h2.6 v2.6 h-2.6 Z" fill="#383838"/><path d="M1351.2,683.6 v2.4 h-2.4 Z" fill="#9a9a9a"/>
<path d="M1348.4,688 h2.6 v2.6 h-2.6 Z" fill="#383838"/><path d="M1351.2,688.6 v2.4 h-2.4 Z" fill="#9a9a9a"/>
<path d="M1348.4,693 h2.6 v2.6 h-2.6 Z" fill="#383838"/><path d="M1351.2,693.6 v2.4 h-2.4 Z" fill="#9a9a9a"/>
<path d="M1348.4,698 h2.6 v2.6 h-2.6 Z" fill="#383838"/><path d="M1351.2,698.6 v2.4 h-2.4 Z" fill="#9a9a9a"/>
<path d="M1348.4,703 h2.6 v2.6 h-2.6 Z" fill="#383838"/><path d="M1351.2,703.6 v2.4 h-2.4 Z" fill="#9a9a9a"/>
<path d="M1348.4,708 h2.6 v2.6 h-2.6 Z" fill="#383838"/><path d="M1351.2,708.6 v2.4 h-2.4 Z" fill="#9a9a9a"/>
<path d="M1348.4,713 h2.6 v2.6 h-2.6 Z" fill="#383838"/><path d="M1351.2,713.6 v2.4 h-2.4 Z" fill="#9a9a9a"/>
<path d="M1348.4,718 h2.6 v2.6 h-2.6 Z" fill="#383838"/><path d="M1351.2,718.6 v2.4 h-2.4 Z" fill="#9a9a9a"/>
<path d="M1348.4,723 h2.6 v2.6 h-2.6 Z" fill="#383838"/><path d="M1351.2,723.6 v2.4 h-2.4 Z" fill="#9a9a9a"/>
<path d="M1348.4,728 h2.6 v2.6 h-2.6 Z" fill="#383838"/><path d="M1351.2,728.6 v2.4 h-2.4 Z" fill="#9a9a9a"/>
<path d="M1348.4,733 h2.6 v2.6 h-2.6 Z" fill="#383838"/><path d="M1351.2,733.6 v2.4 h-2.4 Z" fill="#9a9a9a"/>
<path d="M1348.4,738 h2.6 v2.6 h-2.6 Z" fill="#383838"/><path d="M1351.2,738.6 v2.4 h-2.4 Z" fill="#9a9a9a"/>
<path d="M1348.4,743 h2.6 v2.6 h-2.6 Z" fill="#383838"/><path d="M1351.2,743.6 v2.4 h-2.4 Z" fill="#9a9a9a"/>
<path d="M1348.4,748 h2.6 v2.6 h-2.6 Z" fill="#383838"/><path d="M1351.2,748.6 v2.4 h-2.4 Z" fill="#9a9a9a"/>
<path d="M1348.4,753 h2.6 v2.6 h-2.6 Z" fill="#383838"/><path d="M1351.2,753.6 v2.4 h-2.4 Z" fill="#9a9a9a"/>
<path d="M1348.4,758 h2.6 v2.6 h-2.6 Z" fill="#383838"/><path d="M1351.2,758.6 v2.4 h-2.4 Z" fill="#9a9a9a"/>
<path d="M1348.4,763 h2.6 v2.6 h-2.6 Z" fill="#383838"/><path d="M1351.2,763.6 v2.4 h-2.4 Z" fill="#9a9a9a"/>
<path d="M1348.4,768 h2.6 v2.6 h-2.6 Z" fill="#383838"/><path d="M1351.2,768.6 v2.4 h-2.4 Z" fill="#9a9a9a"/>
<path d="M1348.4,773 h2.6 v2.6 h-2.6 Z" fill="#383838"/><path d="M1351.2,773.6 v2.4 h-2.4 Z" fill="#9a9a9a"/>
<path d="M1348.4,778 h2.6 v2.6 h-2.6 Z" fill="#383838"/><path d="M1351.2,778.6 v2.4 h-2.4 Z" fill="#9a9a9a"/>
<path d="M1348.4,783 h2.6 v2.6 h-2.6 Z" fill="#383838"/><path d="M1351.2,783.6 v2.4 h-2.4 Z" fill="#9a9a9a"/>
<path d="M1348.4,788 h2.6 v2.6 h-2.6 Z" fill="#383838"/><path d="M1351.2,788.6 v2.4 h-2.4 Z" fill="#9a9a9a"/>
<rect x="1359.5" y="-2" width="119" height="18.2" fill="#3a3a3a" rx="3" stroke="#2b2b2b" stroke-width="1"/>
<rect x="1403" y="0" width="1" height="16" fill="#2b2b2b" />
<rect x="1404" y="0" width="1" height="16" fill="#4a4a4a" />
<rect x="1478.5" y="-3" width="82" height="20" fill="#656565" rx="3" stroke="#3a3a3a" stroke-width="1"/>
<rect x="1479" y="14" width="81" height="3.4" fill="#656565" />
<path d="M1775,17 V21.5 H1361.5 Q1359.2,21.5 1359.2,19.2 Q1359.2,17 1361.5,17 Z" fill="#4f4f4f"/>
<path d="M1561,16.6 H1775 M1775,21.6 H1361.5 Q1359.2,21.6 1359.2,19.1 Q1359.2,16.6 1361.5,16.6 H1479" fill="none" stroke="#2f2f2f" stroke-width="1"/>
<rect x="1561.5" y="0" width="215" height="16" fill="#404040" />
<rect x="1509" y="48.8" width="154.2" height="22.2" fill="#2b2b2b" rx="3" stroke="#393939" stroke-width="0.8"/>
<path d="M1678.8,45 V42.8 H1689.4 V54.4 H1678.8 V52.2" fill="none" stroke="#0a0a0a" stroke-width="1.2"/><path d="M1674.8,44.8 L1683,48.3 L1674.8,51.8 Z" fill="#0a0a0a"/>
<path d="M1689.4,67 V64.7 H1678.8 V76.3 H1689.4 V74" fill="none" stroke="#0a0a0a" stroke-width="1.2"/><path d="M1684.9,66.8 L1693.1,70.2 L1684.9,73.6 Z" fill="#0a0a0a"/>
<rect x="1704.6" y="28.6" width="80" height="18.6" fill="url(#btg)" rx="3" stroke="#2e2e2e" stroke-width="1"/>
<path d="M1707.1,29.8 H1782.1" stroke="#777" stroke-width="0.8"/>
<rect x="1704.6" y="50.7" width="80" height="18.6" fill="url(#btg)" rx="3" stroke="#2e2e2e" stroke-width="1"/>
<path d="M1707.1,51.900000000000006 H1782.1" stroke="#777" stroke-width="0.8"/>
<rect x="1704.6" y="72.6" width="32.6" height="18.8" fill="#4d4d4d" rx="3" stroke="#2e2e2e" stroke-width="1"/>
<path d="M1707.1,73.8 H1734.6999999999998" stroke="#777" stroke-width="0.8"/>
<rect x="1740.6" y="72.6" width="40" height="18.8" fill="url(#btg)" rx="3" stroke="#2e2e2e" stroke-width="1"/>
<path d="M1743.1,73.8 H1778.1" stroke="#777" stroke-width="0.8"/>
<path d="M1775,98.5 H1362.5 Q1359.5,98.5 1359.5,101.5 V999.5 Q1359.5,1002.5 1362.5,1002.5 H1766.5 Q1769.5,1002.5 1769.5,999.5" fill="none" stroke="#2c2c2c" stroke-width="1"/>
<path d="M1775,99.5 H1363 Q1360.5,99.5 1360.5,102 V999.5" fill="none" stroke="#5e5e5e" stroke-width="1"/>
<rect x="1512" y="106" width="64" height="64" fill="#222" />
<path d="M1520,106h8v8h-8ZM1536,106h8v8h-8ZM1552,106h8v8h-8ZM1568,106h8v8h-8ZM1512,114h8v8h-8ZM1528,114h8v8h-8ZM1544,114h8v8h-8ZM1560,114h8v8h-8ZM1520,122h8v8h-8ZM1536,122h8v8h-8ZM1552,122h8v8h-8ZM1568,122h8v8h-8ZM1512,130h8v8h-8ZM1528,130h8v8h-8ZM1544,130h8v8h-8ZM1560,130h8v8h-8ZM1520,138h8v8h-8ZM1536,138h8v8h-8ZM1552,138h8v8h-8ZM1568,138h8v8h-8ZM1512,146h8v8h-8ZM1528,146h8v8h-8ZM1544,146h8v8h-8ZM1560,146h8v8h-8ZM1520,154h8v8h-8ZM1536,154h8v8h-8ZM1552,154h8v8h-8ZM1568,154h8v8h-8ZM1512,162h8v8h-8ZM1528,162h8v8h-8ZM1544,162h8v8h-8ZM1560,162h8v8h-8Z" fill="#828282"/>
<path d="M1769.5,998 V180.5 Q1769.5,177.5 1766.5,177.5 H1364.5 Q1361.5,177.5 1361.5,180.5 V998.5 Q1361.5,1000.5 1364,1000.5 H1751" fill="none" stroke="#2c2c2c" stroke-width="1"/>
<rect x="1362" y="181" width="1" height="817" fill="#4a4a4a" />
<rect x="1752.6" y="180" width="15" height="820" fill="#3a3a3a" />
<rect x="1753" y="811" width="14.4" height="159" fill="url(#hatch)" />
<rect x="1753" y="194.8" width="14.4" height="616.2" fill="url(#thg)" stroke="#2c2c2c" stroke-width="1"/>
<rect x="1754" y="196" width="1" height="614" fill="#6c6c6c" />
<rect x="1756.0" y="495.0" width="1.3" height="1.3" fill="#2e2e2e"/><rect x="1757.0" y="496.0" width="1" height="1" fill="#8a8a8a"/>
<rect x="1759.5" y="495.0" width="1.3" height="1.3" fill="#2e2e2e"/><rect x="1760.5" y="496.0" width="1" height="1" fill="#8a8a8a"/>
<rect x="1763.0" y="495.0" width="1.3" height="1.3" fill="#2e2e2e"/><rect x="1764.0" y="496.0" width="1" height="1" fill="#8a8a8a"/>
<rect x="1756.0" y="499.3" width="1.3" height="1.3" fill="#2e2e2e"/><rect x="1757.0" y="500.3" width="1" height="1" fill="#8a8a8a"/>
<rect x="1759.5" y="499.3" width="1.3" height="1.3" fill="#2e2e2e"/><rect x="1760.5" y="500.3" width="1" height="1" fill="#8a8a8a"/>
<rect x="1763.0" y="499.3" width="1.3" height="1.3" fill="#2e2e2e"/><rect x="1764.0" y="500.3" width="1" height="1" fill="#8a8a8a"/>
<rect x="1756.0" y="503.6" width="1.3" height="1.3" fill="#2e2e2e"/><rect x="1757.0" y="504.6" width="1" height="1" fill="#8a8a8a"/>
<rect x="1759.5" y="503.6" width="1.3" height="1.3" fill="#2e2e2e"/><rect x="1760.5" y="504.6" width="1" height="1" fill="#8a8a8a"/>
<rect x="1763.0" y="503.6" width="1.3" height="1.3" fill="#2e2e2e"/><rect x="1764.0" y="504.6" width="1" height="1" fill="#8a8a8a"/>
<rect x="1756.0" y="507.9" width="1.3" height="1.3" fill="#2e2e2e"/><rect x="1757.0" y="508.9" width="1" height="1" fill="#8a8a8a"/>
<rect x="1759.5" y="507.9" width="1.3" height="1.3" fill="#2e2e2e"/><rect x="1760.5" y="508.9" width="1" height="1" fill="#8a8a8a"/>
<rect x="1763.0" y="507.9" width="1.3" height="1.3" fill="#2e2e2e"/><rect x="1764.0" y="508.9" width="1" height="1" fill="#8a8a8a"/>
<rect x="1756.0" y="512.2" width="1.3" height="1.3" fill="#2e2e2e"/><rect x="1757.0" y="513.2" width="1" height="1" fill="#8a8a8a"/>
<rect x="1759.5" y="512.2" width="1.3" height="1.3" fill="#2e2e2e"/><rect x="1760.5" y="513.2" width="1" height="1" fill="#8a8a8a"/>
<rect x="1763.0" y="512.2" width="1.3" height="1.3" fill="#2e2e2e"/><rect x="1764.0" y="513.2" width="1" height="1" fill="#8a8a8a"/>
<rect x="1752.8" y="180.2" width="14.6" height="14.2" fill="#5a5a5a" rx="2.5" stroke="#2c2c2c" stroke-width="1"/>
<path d="M1756.4,189.2 L1763.6,189.2 L1760,185.39999999999998 Z" fill="#d4d4d4"/>
<rect x="1752.8" y="970.3" width="14.6" height="14.2" fill="#5a5a5a" rx="2.5" stroke="#2c2c2c" stroke-width="1"/>
<path d="M1756.4,979.3 L1763.6,979.3 L1760,975.5 Z" fill="#d4d4d4"/>
<rect x="1752.8" y="985.6" width="14.6" height="14.2" fill="#5a5a5a" rx="2.5" stroke="#2c2c2c" stroke-width="1"/>
<path d="M1756.4,990.8000000000001 L1763.6,990.8000000000001 L1760,994.6 Z" fill="#d4d4d4"/>
<rect x="1514.5" y="183.7" width="130.2" height="18.8" fill="url(#ddg2)" rx="3" stroke="#2d2d2d" stroke-width="1"/>
<rect x="1628.3" y="184.2" width="1" height="17.80000000000001" fill="#3a3a3a" />
<path d="M1633.4,191.29999999999998 L1640.6,191.29999999999998 L1637.0,195.29999999999998 Z" fill="#cfcfcf"/>
<rect x="1365" y="205" width="384" height="19" fill="#505050" />
<rect x="1365" y="205" width="384" height="1" fill="#666666" />
<rect x="1365" y="205" width="1" height="19" fill="#606060" />
<rect x="1365" y="224" width="384" height="1" fill="#2a2a2a" />
<path d="M1371.8,210.9 h9.3 l-4.65,5.4 Z" fill="#d4d4d4"/>
<rect x="1365" y="420" width="384" height="20" fill="#505050" />
<rect x="1365" y="420" width="384" height="1" fill="#666666" />
<rect x="1365" y="420" width="1" height="20" fill="#606060" />
<rect x="1365" y="440" width="384" height="1" fill="#2a2a2a" />
<path d="M1373.7,424.90000000000003 v9.4 l5.6,-4.7 Z" fill="#d4d4d4"/>
<rect x="1365" y="441" width="384" height="19" fill="#505050" />
<rect x="1365" y="441" width="384" height="1" fill="#666666" />
<rect x="1365" y="441" width="1" height="19" fill="#606060" />
<rect x="1365" y="460" width="384" height="1" fill="#2a2a2a" />
<path d="M1373.7,444.90000000000003 v9.4 l5.6,-4.7 Z" fill="#d4d4d4"/>
<rect x="1365" y="461" width="384" height="19" fill="#505050" />
<rect x="1365" y="461" width="384" height="1" fill="#666666" />
<rect x="1365" y="461" width="1" height="19" fill="#606060" />
<rect x="1365" y="480" width="384" height="1" fill="#2a2a2a" />
<path d="M1373.7,464.90000000000003 v9.4 l5.6,-4.7 Z" fill="#d4d4d4"/>
<rect x="1365" y="481" width="384" height="19" fill="#505050" />
<rect x="1365" y="481" width="384" height="1" fill="#666666" />
<rect x="1365" y="481" width="1" height="19" fill="#606060" />
<rect x="1365" y="500" width="384" height="1" fill="#2a2a2a" />
<path d="M1373.7,484.90000000000003 v9.4 l5.6,-4.7 Z" fill="#d4d4d4"/>
<rect x="1365" y="501" width="384" height="19" fill="#505050" />
<rect x="1365" y="501" width="384" height="1" fill="#666666" />
<rect x="1365" y="501" width="1" height="19" fill="#606060" />
<rect x="1365" y="520" width="384" height="1" fill="#2a2a2a" />
<path d="M1371.8,506.90000000000003 h9.3 l-4.65,5.4 Z" fill="#d4d4d4"/>
<rect x="1367" y="801" width="380" height="19" fill="#505050" />
<rect x="1367" y="801" width="380" height="1" fill="#666666" />
<rect x="1367" y="801" width="1" height="19" fill="#606060" />
<rect x="1367" y="820" width="380" height="1" fill="#2a2a2a" />
<path d="M1373.8,806.9 h9.3 l-4.65,5.4 Z" fill="#d4d4d4"/>
<path d="M1365.5,419 V225.5 H1748.5 V419" fill="none" stroke="#2a2a2a" stroke-width="1"/>
<path d="M1366.5,419 V226.5 H1747.5" fill="none" stroke="#626262" stroke-width="1"/>
<rect x="1365" y="419" width="384" height="1" fill="#2a2a2a" />
<path d="M1365.5,1001 V521.5 H1748.5 V1001" fill="none" stroke="#2a2a2a" stroke-width="1"/>
<path d="M1366.5,1001 V522.5 H1747.5" fill="none" stroke="#626262" stroke-width="1"/>
<path d="M1367.5,1001 V821.5 H1746.5 V1001" fill="none" stroke="#2a2a2a" stroke-width="1"/>
<path d="M1368.5,1001 V822.5 H1745.5" fill="none" stroke="#626262" stroke-width="1"/>
<rect x="1367" y="571" width="381" height="1" fill="#2a2a2a" />
<rect x="1367" y="572" width="381" height="1" fill="#626262" />
<rect x="1367" y="723" width="381" height="1" fill="#2a2a2a" />
<rect x="1367" y="724" width="381" height="1" fill="#626262" />
<rect x="1515.7" y="230.1" width="68.4" height="13" fill="#000" />
<rect x="1587.2" y="234.5" width="128.0" height="3.2" fill="#3a3a3a" rx="1.6" stroke="#2b2b2b" stroke-width="0.9"/>
<rect x="1588.7" y="238.1" width="125.0" height="0.7" fill="#555" />
<path d="M1587.8000000000002,231.20000000000002 Q1587.8000000000002,229.70000000000002 1589.3000000000002,229.70000000000002 L1595.5000000000002,229.70000000000002 Q1597.0000000000002,229.70000000000002 1597.0000000000002,231.20000000000002 L1597.0000000000002,238.3 L1592.4,243.10000000000002 L1587.8000000000002,238.3 Z" fill="#5e5e5e" stroke="#1f1f1f" stroke-width="0.9"/>
<path d="M1588.7000000000003,237.70000000000002 V231.4 Q1588.7000000000003,230.60000000000002 1589.6000000000001,230.60000000000002 H1595.4" fill="none" stroke="#b4b4b4" stroke-width="0.9"/>
<rect x="1723" y="230.29999999999998" width="12" height="12" fill="#fff" />
<rect x="1729" y="231.29999999999998" width="5" height="5" fill="#000" />
<rect x="1724" y="236.29999999999998" width="5" height="5" fill="#000" />
<rect x="1515.7" y="250.0" width="68.4" height="13" fill="#fff" />
<rect x="1587.2" y="254.4" width="128.0" height="3.2" fill="#3a3a3a" rx="1.6" stroke="#2b2b2b" stroke-width="0.9"/>
<rect x="1588.7" y="258.0" width="125.0" height="0.7" fill="#555" />
<path d="M1704.7,251.10000000000002 Q1704.7,249.60000000000002 1706.2,249.60000000000002 L1712.4,249.60000000000002 Q1713.9,249.60000000000002 1713.9,251.10000000000002 L1713.9,258.20000000000005 L1709.3,263.0 L1704.7,258.20000000000005 Z" fill="#5e5e5e" stroke="#1f1f1f" stroke-width="0.9"/>
<path d="M1705.6000000000001,257.6 V251.3 Q1705.6000000000001,250.50000000000003 1706.5,250.50000000000003 H1712.3" fill="none" stroke="#b4b4b4" stroke-width="0.9"/>
<rect x="1723" y="250.2" width="12" height="12" fill="#fff" />
<rect x="1729" y="251.2" width="5" height="5" fill="#000" />
<rect x="1724" y="256.2" width="5" height="5" fill="#000" />
<rect x="1515.7" y="270.0" width="68.4" height="13" fill="#000" />
<rect x="1587.2" y="274.4" width="128.0" height="3.2" fill="#3a3a3a" rx="1.6" stroke="#2b2b2b" stroke-width="0.9"/>
<rect x="1588.7" y="277.99999999999994" width="125.0" height="0.7" fill="#555" />
<path d="M1587.8000000000002,271.09999999999997 Q1587.8000000000002,269.59999999999997 1589.3000000000002,269.59999999999997 L1595.5000000000002,269.59999999999997 Q1597.0000000000002,269.59999999999997 1597.0000000000002,271.09999999999997 L1597.0000000000002,278.2 L1592.4,282.99999999999994 L1587.8000000000002,278.2 Z" fill="#5e5e5e" stroke="#1f1f1f" stroke-width="0.9"/>
<path d="M1588.7000000000003,277.59999999999997 V271.29999999999995 Q1588.7000000000003,270.49999999999994 1589.6000000000001,270.49999999999994 H1595.4" fill="none" stroke="#b4b4b4" stroke-width="0.9"/>
<rect x="1723" y="270.2" width="12" height="12" fill="#fff" />
<rect x="1729" y="271.2" width="5" height="5" fill="#000" />
<rect x="1724" y="276.2" width="5" height="5" fill="#000" />
<rect x="1515.7" y="289.9" width="68.4" height="13" fill="#000" />
<rect x="1587.2" y="294.29999999999995" width="128.0" height="3.2" fill="#3a3a3a" rx="1.6" stroke="#2b2b2b" stroke-width="0.9"/>
<rect x="1588.7" y="297.8999999999999" width="125.0" height="0.7" fill="#555" />
<path d="M1587.8000000000002,290.99999999999994 Q1587.8000000000002,289.49999999999994 1589.3000000000002,289.49999999999994 L1595.5000000000002,289.49999999999994 Q1597.0000000000002,289.49999999999994 1597.0000000000002,290.99999999999994 L1597.0000000000002,298.09999999999997 L1592.4,302.8999999999999 L1587.8000000000002,298.09999999999997 Z" fill="#5e5e5e" stroke="#1f1f1f" stroke-width="0.9"/>
<path d="M1588.7000000000003,297.49999999999994 V291.19999999999993 Q1588.7000000000003,290.3999999999999 1589.6000000000001,290.3999999999999 H1595.4" fill="none" stroke="#b4b4b4" stroke-width="0.9"/>
<rect x="1723" y="290.09999999999997" width="12" height="12" fill="#fff" />
<rect x="1729" y="291.09999999999997" width="5" height="5" fill="#000" />
<rect x="1724" y="296.09999999999997" width="5" height="5" fill="#000" />
<rect x="1516.8" y="310" width="196.5" height="18.2" fill="#2d2d2d" rx="2.5" stroke="#3a3a3a" stroke-width="0.8"/>
<rect x="1722.2" y="312.5" width="12" height="12" fill="#fff" />
<rect x="1728.2" y="313.5" width="5" height="5" fill="#000" />
<rect x="1723.2" y="318.5" width="5" height="5" fill="#000" />
<rect x="1516" y="332.7" width="68.2" height="18" fill="#2b2b2b" rx="2.5" stroke="#383838" stroke-width="0.8"/>
<rect x="1587.2" y="339.3" width="128.0" height="3.2" fill="#3a3a3a" rx="1.6" stroke="#2b2b2b" stroke-width="0.9"/>
<rect x="1588.7" y="342.9" width="125.0" height="0.7" fill="#555" />
<path d="M1680.7,336.0 Q1680.7,334.5 1682.2,334.5 L1688.4,334.5 Q1689.9,334.5 1689.9,336.0 L1689.9,343.1 L1685.3,347.9 L1680.7,343.1 Z" fill="#5e5e5e" stroke="#1f1f1f" stroke-width="0.9"/>
<path d="M1681.6000000000001,342.5 V336.2 Q1681.6000000000001,335.4 1682.5,335.4 H1688.3" fill="none" stroke="#b4b4b4" stroke-width="0.9"/>
<rect x="1723" y="335.09999999999997" width="12" height="12" fill="#fff" />
<rect x="1729" y="336.09999999999997" width="5" height="5" fill="#000" />
<rect x="1724" y="341.09999999999997" width="5" height="5" fill="#000" />
<rect x="1516" y="355" width="68.2" height="18" fill="#2b2b2b" rx="2.5" stroke="#383838" stroke-width="0.8"/>
<rect x="1587.2" y="361.6" width="128.0" height="3.2" fill="#3a3a3a" rx="1.6" stroke="#2b2b2b" stroke-width="0.9"/>
<rect x="1588.7" y="365.2" width="125.0" height="0.7" fill="#555" />
<path d="M1587.8000000000002,358.3 Q1587.8000000000002,356.8 1589.3000000000002,356.8 L1595.5000000000002,356.8 Q1597.0000000000002,356.8 1597.0000000000002,358.3 L1597.0000000000002,365.40000000000003 L1592.4,370.2 L1587.8000000000002,365.40000000000003 Z" fill="#5e5e5e" stroke="#1f1f1f" stroke-width="0.9"/>
<path d="M1588.7000000000003,364.8 V358.5 Q1588.7000000000003,357.7 1589.6000000000001,357.7 H1595.4" fill="none" stroke="#b4b4b4" stroke-width="0.9"/>
<rect x="1723" y="357.4" width="12" height="12" fill="#fff" />
<rect x="1729" y="358.4" width="5" height="5" fill="#000" />
<rect x="1724" y="363.4" width="5" height="5" fill="#000" />
<rect x="1516" y="376.9" width="68.2" height="18" fill="#2b2b2b" rx="2.5" stroke="#383838" stroke-width="0.8"/>
<rect x="1587.2" y="383.5" width="128.0" height="3.2" fill="#3a3a3a" rx="1.6" stroke="#2b2b2b" stroke-width="0.9"/>
<rect x="1588.7" y="387.09999999999997" width="125.0" height="0.7" fill="#555" />
<path d="M1598.4,380.2 Q1598.4,378.7 1599.9,378.7 L1606.1000000000001,378.7 Q1607.6000000000001,378.7 1607.6000000000001,380.2 L1607.6000000000001,387.3 L1603.0,392.09999999999997 L1598.4,387.3 Z" fill="#5e5e5e" stroke="#1f1f1f" stroke-width="0.9"/>
<path d="M1599.3000000000002,386.7 V380.4 Q1599.3000000000002,379.59999999999997 1600.2,379.59999999999997 H1606.0" fill="none" stroke="#b4b4b4" stroke-width="0.9"/>
<rect x="1723" y="379.29999999999995" width="12" height="12" fill="#fff" />
<rect x="1729" y="380.29999999999995" width="5" height="5" fill="#000" />
<rect x="1724" y="385.29999999999995" width="5" height="5" fill="#000" />
<rect x="1516" y="398.9" width="68.2" height="18" fill="#2b2b2b" rx="2.5" stroke="#383838" stroke-width="0.8"/>
<rect x="1587.2" y="405.5" width="128.0" height="3.2" fill="#3a3a3a" rx="1.6" stroke="#2b2b2b" stroke-width="0.9"/>
<rect x="1588.7" y="409.09999999999997" width="125.0" height="0.7" fill="#555" />
<path d="M1645.5,402.2 Q1645.5,400.7 1647.0,400.7 L1653.2,400.7 Q1654.7,400.7 1654.7,402.2 L1654.7,409.3 L1650.1,414.09999999999997 L1645.5,409.3 Z" fill="#5e5e5e" stroke="#1f1f1f" stroke-width="0.9"/>
<path d="M1646.4,408.7 V402.4 Q1646.4,401.59999999999997 1647.3,401.59999999999997 H1653.1" fill="none" stroke="#b4b4b4" stroke-width="0.9"/>
<rect x="1723" y="401.29999999999995" width="12" height="12" fill="#fff" />
<rect x="1729" y="402.29999999999995" width="5" height="5" fill="#000" />
<rect x="1724" y="407.29999999999995" width="5" height="5" fill="#000" />
<rect x="1516.8" y="527.0" width="68.4" height="13" fill="#000" />
<rect x="1588" y="531.7" width="126.5" height="3.2" fill="#3a3a3a" rx="1.6" stroke="#2b2b2b" stroke-width="0.9"/>
<rect x="1589.5" y="535.3000000000001" width="123.5" height="0.7" fill="#555" />
<path d="M1588.5,528.4 Q1588.5,526.9 1590.0,526.9 L1596.2,526.9 Q1597.7,526.9 1597.7,528.4 L1597.7,535.5 L1593.1,540.3 L1588.5,535.5 Z" fill="#5e5e5e" stroke="#1f1f1f" stroke-width="0.9"/>
<path d="M1589.4,534.9 V528.6 Q1589.4,527.8 1590.3,527.8 H1596.1" fill="none" stroke="#b4b4b4" stroke-width="0.9"/>
<rect x="1722.2" y="527.3" width="12" height="12" fill="#fff" />
<rect x="1728.2" y="528.3" width="5" height="5" fill="#000" />
<rect x="1723.2" y="533.3" width="5" height="5" fill="#000" />
<rect x="1516.8" y="548.9" width="68.4" height="13" fill="#fff" />
<rect x="1588" y="553.5" width="126.5" height="3.2" fill="#3a3a3a" rx="1.6" stroke="#2b2b2b" stroke-width="0.9"/>
<rect x="1589.5" y="557.1" width="123.5" height="0.7" fill="#555" />
<path d="M1702.8000000000002,550.1999999999999 Q1702.8000000000002,548.6999999999999 1704.3000000000002,548.6999999999999 L1710.5000000000002,548.6999999999999 Q1712.0000000000002,548.6999999999999 1712.0000000000002,550.1999999999999 L1712.0000000000002,557.3 L1707.4,562.0999999999999 L1702.8000000000002,557.3 Z" fill="#5e5e5e" stroke="#1f1f1f" stroke-width="0.9"/>
<path d="M1703.7000000000003,556.6999999999999 V550.4 Q1703.7000000000003,549.5999999999999 1704.6000000000001,549.5999999999999 H1710.4" fill="none" stroke="#b4b4b4" stroke-width="0.9"/>
<rect x="1722.2" y="549.2" width="12" height="12" fill="#fff" />
<rect x="1728.2" y="550.2" width="5" height="5" fill="#000" />
<rect x="1723.2" y="555.2" width="5" height="5" fill="#000" />
<rect x="1516.8" y="579.9" width="68.2" height="18" fill="#2b2b2b" rx="2.5" stroke="#383838" stroke-width="0.8"/>
<rect x="1588" y="586.7" width="126.5" height="3.2" fill="#3a3a3a" rx="1.6" stroke="#2b2b2b" stroke-width="0.9"/>
<rect x="1589.5" y="590.3000000000001" width="123.5" height="0.7" fill="#555" />
<path d="M1588.5,583.4 Q1588.5,581.9 1590.0,581.9 L1596.2,581.9 Q1597.7,581.9 1597.7,583.4 L1597.7,590.5 L1593.1,595.3 L1588.5,590.5 Z" fill="#5e5e5e" stroke="#1f1f1f" stroke-width="0.9"/>
<path d="M1589.4,589.9 V583.6 Q1589.4,582.8 1590.3,582.8 H1596.1" fill="none" stroke="#b4b4b4" stroke-width="0.9"/>
<rect x="1722.2" y="582.2" width="12" height="12" fill="#fff" />
<rect x="1728.2" y="583.2" width="5" height="5" fill="#000" />
<rect x="1723.2" y="588.2" width="5" height="5" fill="#000" />
<rect x="1516.8" y="604.8" width="68.4" height="13" fill="#808080" />
<rect x="1588" y="609.3" width="126.5" height="3.2" fill="#3a3a3a" rx="1.6" stroke="#2b2b2b" stroke-width="0.9"/>
<rect x="1589.5" y="612.9" width="123.5" height="0.7" fill="#555" />
<path d="M1645.5,605.9999999999999 Q1645.5,604.4999999999999 1647.0,604.4999999999999 L1653.2,604.4999999999999 Q1654.7,604.4999999999999 1654.7,605.9999999999999 L1654.7,613.0999999999999 L1650.1,617.8999999999999 L1645.5,613.0999999999999 Z" fill="#484848" stroke="#2a2a2a" stroke-width="0.9"/>
<rect x="1722.2" y="605" width="12" height="12" fill="#bcbcbc" />
<rect x="1728.2" y="606" width="5" height="5" fill="#6a6a6a" />
<rect x="1723.2" y="611" width="5" height="5" fill="#6a6a6a" />
<rect x="1516.8" y="626" width="68.2" height="18" fill="#434343" rx="2.5" stroke="#555" stroke-width="1"/>
<rect x="1588" y="632.5" width="126.5" height="3.2" fill="#3a3a3a" rx="1.6" stroke="#2b2b2b" stroke-width="0.9"/>
<rect x="1589.5" y="636.1" width="123.5" height="0.7" fill="#555" />
<path d="M1631.4,629.1999999999999 Q1631.4,627.6999999999999 1632.9,627.6999999999999 L1639.1000000000001,627.6999999999999 Q1640.6000000000001,627.6999999999999 1640.6000000000001,629.1999999999999 L1640.6000000000001,636.3 L1636.0,641.0999999999999 L1631.4,636.3 Z" fill="#484848" stroke="#2a2a2a" stroke-width="0.9"/>
<rect x="1722.2" y="628" width="12" height="12" fill="#bcbcbc" />
<rect x="1728.2" y="629" width="5" height="5" fill="#6a6a6a" />
<rect x="1723.2" y="634" width="5" height="5" fill="#6a6a6a" />
<rect x="1516.3" y="649.5" width="83.8" height="18.6" fill="url(#ddg2)" rx="3" stroke="#2d2d2d" stroke-width="1"/>
<rect x="1584.3" y="650.0" width="1" height="17.600000000000023" fill="#3a3a3a" />
<path d="M1589.1000000000001,657.0 L1596.3,657.0 L1592.7,661.0 Z" fill="#8e8e8e"/>
<rect x="1516.8" y="674" width="68.2" height="18" fill="#434343" rx="2.5" stroke="#555" stroke-width="1"/>
<rect x="1588" y="680.5" width="126.5" height="3.2" fill="#3a3a3a" rx="1.6" stroke="#2b2b2b" stroke-width="0.9"/>
<rect x="1589.5" y="684.1" width="123.5" height="0.7" fill="#555" />
<path d="M1599.5,677.1999999999999 Q1599.5,675.6999999999999 1601.0,675.6999999999999 L1607.2,675.6999999999999 Q1608.7,675.6999999999999 1608.7,677.1999999999999 L1608.7,684.3 L1604.1,689.0999999999999 L1599.5,684.3 Z" fill="#484848" stroke="#2a2a2a" stroke-width="0.9"/>
<rect x="1722.2" y="676" width="12" height="12" fill="#bcbcbc" />
<rect x="1728.2" y="677" width="5" height="5" fill="#6a6a6a" />
<rect x="1723.2" y="682" width="5" height="5" fill="#6a6a6a" />
<rect x="1516.8" y="698" width="68.2" height="18" fill="#434343" rx="2.5" stroke="#555" stroke-width="1"/>
<rect x="1594.3" y="700" width="12" height="12" fill="#bcbcbc" />
<rect x="1600.3" y="701" width="5" height="5" fill="#6a6a6a" />
<rect x="1595.3" y="706" width="5" height="5" fill="#6a6a6a" />
<rect x="1516.8" y="732" width="68.2" height="18" fill="#2b2b2b" rx="2.5" stroke="#383838" stroke-width="0.8"/>
<rect x="1588" y="738.7" width="126.5" height="3.2" fill="#3a3a3a" rx="1.6" stroke="#2b2b2b" stroke-width="0.9"/>
<rect x="1589.5" y="742.3000000000001" width="123.5" height="0.7" fill="#555" />
<path d="M1588.5,735.4 Q1588.5,733.9 1590.0,733.9 L1596.2,733.9 Q1597.7,733.9 1597.7,735.4 L1597.7,742.5 L1593.1,747.3 L1588.5,742.5 Z" fill="#5e5e5e" stroke="#1f1f1f" stroke-width="0.9"/>
<path d="M1589.4,741.9 V735.6 Q1589.4,734.8 1590.3,734.8 H1596.1" fill="none" stroke="#b4b4b4" stroke-width="0.9"/>
<rect x="1722.2" y="734.2" width="12" height="12" fill="#fff" />
<rect x="1728.2" y="735.2" width="5" height="5" fill="#000" />
<rect x="1723.2" y="740.2" width="5" height="5" fill="#000" />
<rect x="1516.8" y="756.2" width="68.2" height="18" fill="#434343" rx="2.5" stroke="#555" stroke-width="1"/>
<rect x="1588" y="762.7" width="126.5" height="3.2" fill="#3a3a3a" rx="1.6" stroke="#2b2b2b" stroke-width="0.9"/>
<rect x="1589.5" y="766.3000000000001" width="123.5" height="0.7" fill="#555" />
<path d="M1599.4,759.4 Q1599.4,757.9 1600.9,757.9 L1607.1000000000001,757.9 Q1608.6000000000001,757.9 1608.6000000000001,759.4 L1608.6000000000001,766.5 L1604.0,771.3 L1599.4,766.5 Z" fill="#484848" stroke="#2a2a2a" stroke-width="0.9"/>
<rect x="1722.2" y="758.2" width="12" height="12" fill="#bcbcbc" />
<rect x="1728.2" y="759.2" width="5" height="5" fill="#6a6a6a" />
<rect x="1723.2" y="764.2" width="5" height="5" fill="#6a6a6a" />
<rect x="1516.8" y="780.2" width="68.2" height="18" fill="#434343" rx="2.5" stroke="#555" stroke-width="1"/>
<rect x="1588" y="786.7" width="126.5" height="3.2" fill="#3a3a3a" rx="1.6" stroke="#2b2b2b" stroke-width="0.9"/>
<rect x="1589.5" y="790.3000000000001" width="123.5" height="0.7" fill="#555" />
<path d="M1588.5,783.4 Q1588.5,781.9 1590.0,781.9 L1596.2,781.9 Q1597.7,781.9 1597.7,783.4 L1597.7,790.5 L1593.1,795.3 L1588.5,790.5 Z" fill="#484848" stroke="#2a2a2a" stroke-width="0.9"/>
<rect x="1722.2" y="782.2" width="12" height="12" fill="#bcbcbc" />
<rect x="1728.2" y="783.2" width="5" height="5" fill="#6a6a6a" />
<rect x="1723.2" y="788.2" width="5" height="5" fill="#6a6a6a" />
<rect x="1519.2" y="827.4" width="12.4" height="12.4" fill="#2b2b2b" rx="2" stroke="#3a3a3a" stroke-width="0.8"/>
<path d="M1521.8,834.0 L1524.2,837.0 L1529.4,829.6" fill="none" stroke="#f0f0f0" stroke-width="1.7"/>
<rect x="1518" y="856.2" width="179.5" height="25.2" fill="#4d4d4d" rx="3" stroke="#2c2c2c" stroke-width="1"/>
<path d="M1520.5,857.5 H1695" stroke="#5e5e5e" stroke-width="0.8"/>
<rect x="1518.5" y="897" width="69" height="18" fill="#434343" rx="2.5" stroke="#555" stroke-width="1"/>
<rect x="1590.7" y="903.5" width="120.89999999999986" height="3.2" fill="#3a3a3a" rx="1.6" stroke="#2b2b2b" stroke-width="0.9"/>
<rect x="1592.2" y="907.1" width="117.89999999999986" height="0.7" fill="#555" />
<path d="M1590.8000000000002,900.1999999999999 Q1590.8000000000002,898.6999999999999 1592.3000000000002,898.6999999999999 L1598.5000000000002,898.6999999999999 Q1600.0000000000002,898.6999999999999 1600.0000000000002,900.1999999999999 L1600.0000000000002,907.3 L1595.4,912.0999999999999 L1590.8000000000002,907.3 Z" fill="#484848" stroke="#2a2a2a" stroke-width="0.9"/>
<rect x="1720.3" y="899" width="12" height="12" fill="#bcbcbc" />
<rect x="1726.3" y="900" width="5" height="5" fill="#6a6a6a" />
<rect x="1721.3" y="905" width="5" height="5" fill="#6a6a6a" />
<rect x="1519.2" y="922.3" width="12.4" height="12.4" fill="#2b2b2b" rx="2" stroke="#3a3a3a" stroke-width="0.8"/>
<path d="M1521.8,928.9 L1524.2,931.9 L1529.4,924.5" fill="none" stroke="#8e8e8e" stroke-width="1.7"/>
<rect x="1519.2" y="943.4" width="12.4" height="12.4" fill="#2b2b2b" rx="2" stroke="#3a3a3a" stroke-width="0.8"/>
<path d="M1521.8,950.0 L1524.2,953.0 L1529.4,945.6" fill="none" stroke="#8e8e8e" stroke-width="1.7"/>
<rect x="1518.5" y="963.2" width="69" height="18" fill="#434343" rx="2.5" stroke="#555" stroke-width="1"/>
<rect x="1590.7" y="969.7" width="120.89999999999986" height="3.2" fill="#3a3a3a" rx="1.6" stroke="#2b2b2b" stroke-width="0.9"/>
<rect x="1592.2" y="973.3000000000001" width="117.89999999999986" height="0.7" fill="#555" />
<path d="M1678.4,966.4 Q1678.4,964.9 1679.9,964.9 L1686.1000000000001,964.9 Q1687.6000000000001,964.9 1687.6000000000001,966.4 L1687.6000000000001,973.5 L1683.0,978.3 L1678.4,973.5 Z" fill="#484848" stroke="#2a2a2a" stroke-width="0.9"/>
<rect x="1720.3" y="965.2" width="12" height="12" fill="#bcbcbc" />
<rect x="1726.3" y="966.2" width="5" height="5" fill="#6a6a6a" />
<rect x="1721.3" y="971.2" width="5" height="5" fill="#6a6a6a" />
<rect x="1518.9" y="988.0" width="68.4" height="13" fill="#808080" />
<rect x="1590.7" y="992.5" width="120.89999999999986" height="3.2" fill="#3a3a3a" rx="1.6" stroke="#2b2b2b" stroke-width="0.9"/>
<rect x="1592.2" y="996.1" width="117.89999999999986" height="0.7" fill="#555" />
<path d="M1645.5,989.1999999999999 Q1645.5,987.6999999999999 1647.0,987.6999999999999 L1653.2,987.6999999999999 Q1654.7,987.6999999999999 1654.7,989.1999999999999 L1654.7,996.3 L1650.1,1001.0999999999999 L1645.5,996.3 Z" fill="#484848" stroke="#2a2a2a" stroke-width="0.9"/>
<rect x="1720.3" y="988" width="12" height="12" fill="#bcbcbc" />
<rect x="1726.3" y="989" width="5" height="5" fill="#6a6a6a" />
<rect x="1721.3" y="994" width="5" height="5" fill="#6a6a6a" />
<path d="M1496.6,1011.6 l2.2,-2.2 v2.2 Z" fill="#8a8a8a"/>
<path d="M1501.7,1011.6 l2.2,-2.2 v2.2 Z" fill="#8a8a8a"/>
<path d="M1506.8,1011.6 l2.2,-2.2 v2.2 Z" fill="#8a8a8a"/>
<path d="M1511.9,1011.6 l2.2,-2.2 v2.2 Z" fill="#8a8a8a"/>
<path d="M1517.0,1011.6 l2.2,-2.2 v2.2 Z" fill="#8a8a8a"/>
<path d="M1522.1,1011.6 l2.2,-2.2 v2.2 Z" fill="#8a8a8a"/>
<path d="M1527.2,1011.6 l2.2,-2.2 v2.2 Z" fill="#8a8a8a"/>
<path d="M1532.3,1011.6 l2.2,-2.2 v2.2 Z" fill="#8a8a8a"/>
<path d="M1537.4,1011.6 l2.2,-2.2 v2.2 Z" fill="#8a8a8a"/>
<path d="M1542.5,1011.6 l2.2,-2.2 v2.2 Z" fill="#8a8a8a"/>
<path d="M1547.6,1011.6 l2.2,-2.2 v2.2 Z" fill="#8a8a8a"/>
<path d="M1552.7,1011.6 l2.2,-2.2 v2.2 Z" fill="#8a8a8a"/>
<path d="M1557.8,1011.6 l2.2,-2.2 v2.2 Z" fill="#8a8a8a"/>
<path d="M1562.9,1011.6 l2.2,-2.2 v2.2 Z" fill="#8a8a8a"/>
<path d="M1568.0,1011.6 l2.2,-2.2 v2.2 Z" fill="#8a8a8a"/>
<path d="M1573.1,1011.6 l2.2,-2.2 v2.2 Z" fill="#8a8a8a"/>
<path d="M1578.2,1011.6 l2.2,-2.2 v2.2 Z" fill="#8a8a8a"/>
<path d="M1583.3,1011.6 l2.2,-2.2 v2.2 Z" fill="#8a8a8a"/>
<path d="M1588.4,1011.6 l2.2,-2.2 v2.2 Z" fill="#8a8a8a"/>
<path d="M1593.5,1011.6 l2.2,-2.2 v2.2 Z" fill="#8a8a8a"/>
<path d="M1598.6,1011.6 l2.2,-2.2 v2.2 Z" fill="#8a8a8a"/>
<path d="M1603.7,1011.6 l2.2,-2.2 v2.2 Z" fill="#8a8a8a"/>
<path d="M1608.8,1011.6 l2.2,-2.2 v2.2 Z" fill="#8a8a8a"/>
<path d="M1613.9,1011.6 l2.2,-2.2 v2.2 Z" fill="#8a8a8a"/>
<path d="M1619.0,1011.6 l2.2,-2.2 v2.2 Z" fill="#8a8a8a"/>
<path d="M1624.1,1011.6 l2.2,-2.2 v2.2 Z" fill="#8a8a8a"/>
<path d="M1629.2,1011.6 l2.2,-2.2 v2.2 Z" fill="#8a8a8a"/>
<rect x="1357.2" y="1027.3" width="430" height="100" fill="#2b2b2b" rx="3" stroke="#383838" stroke-width="1"/></svg>
<div class="t" style="left:1369px;top:1.5px;color:#d6d6d6;letter-spacing:0.13px;">bars</div>
<div class="t" style="left:1414px;top:1.5px;color:#d6d6d6;letter-spacing:-0.35px;">barsShape</div>
<div class="t" style="left:1489px;top:0.5px;color:#cfcfcf;letter-spacing:-0.35px;">bars_shader</div>
<div class="t" style="right:270.0px;top:53px;color:#d6d6d6;letter-spacing:-0.10px;">lambert:</div>
<div class="t" style="left:1512.4px;top:53.5px;color:#ececec;letter-spacing:-0.35px;">bars_shader</div>
<div class="t" style="left:1723.8px;top:31px;color:#d6d6d6;letter-spacing:-0.47px;">Focus</div>
<div class="t" style="left:1719.8px;top:53px;color:#d6d6d6;letter-spacing:-0.38px;">Presets</div>
<div class="t" style="left:1707.2px;top:74.8px;color:#7e7e7e;letter-spacing:-0.60px;">Show</div>
<div class="t" style="left:1744.8px;top:74.8px;color:#d6d6d6;letter-spacing:-0.33px;">Hide</div>
<div class="t" style="right:266.0px;top:131px;color:#d6d6d6;letter-spacing:-0.75px;">Sample</div>
<div class="t" style="right:266.0px;top:186px;color:#d6d6d6;letter-spacing:-0.75px;">Type</div>
<div class="t" style="left:1518.5px;top:186.4px;color:#cfcfcf;letter-spacing:-0.17px;">Lambert</div>
<div class="t" style="left:1395.5px;top:207.7px;color:#dedede;letter-spacing:0.33px;font-weight:bold;">Common Material Attributes</div>
<div class="t" style="left:1395.5px;top:423.7px;color:#dedede;letter-spacing:-0.11px;font-weight:bold;">Special Effects</div>
<div class="t" style="left:1395.5px;top:443.7px;color:#dedede;letter-spacing:0.44px;font-weight:bold;">Matte Opacity</div>
<div class="t" style="left:1395.5px;top:463.7px;color:#dedede;letter-spacing:0.25px;font-weight:bold;">Raytrace Options</div>
<div class="t" style="left:1395.5px;top:483.7px;color:#dedede;letter-spacing:0.22px;font-weight:bold;">Vector Renderer Control</div>
<div class="t" style="left:1395.5px;top:503.7px;color:#dedede;letter-spacing:0.48px;font-weight:bold;">mental ray</div>
<div class="t" style="left:1397.5px;top:803.7px;color:#dedede;letter-spacing:0.34px;font-weight:bold;">Photon Attributes</div>
<div class="t" style="right:265.0px;top:229.6px;color:#d6d6d6;letter-spacing:-0.75px;">Color</div>
<div class="t" style="right:265.0px;top:249.5px;color:#d6d6d6;letter-spacing:-0.46px;">Transparency</div>
<div class="t" style="right:265.0px;top:269.5px;color:#d6d6d6;letter-spacing:-0.58px;">Ambient Color</div>
<div class="t" style="right:265.0px;top:289.4px;color:#d6d6d6;letter-spacing:-0.37px;">Incandescence</div>
<div class="t" style="right:263.0px;top:312.3px;color:#d6d6d6;letter-spacing:-0.66px;">Bump Mapping</div>
<div class="t" style="right:265.0px;top:334.7px;color:#d6d6d6;letter-spacing:0.00px;">Diffuse</div>
<div class="t" style="left:1519.8px;top:335.7px;color:#eeeeee;letter-spacing:-0.33px;">0.800</div>
<div class="t" style="right:265.0px;top:357px;color:#d6d6d6;letter-spacing:-0.57px;">Translucence</div>
<div class="t" style="left:1519.8px;top:358px;color:#eeeeee;letter-spacing:-0.33px;">0.000</div>
<div class="t" style="right:265.0px;top:378.9px;color:#d6d6d6;letter-spacing:-0.48px;">Translucence Depth</div>
<div class="t" style="left:1519.8px;top:379.9px;color:#eeeeee;letter-spacing:-0.33px;">0.500</div>
<div class="t" style="right:265.0px;top:400.9px;color:#d6d6d6;letter-spacing:-0.61px;">Translucence Focus</div>
<div class="t" style="left:1519.8px;top:401.9px;color:#eeeeee;letter-spacing:-0.33px;">0.500</div>
<div class="t" style="right:264.0px;top:526.8px;color:#d6d6d6;letter-spacing:-0.18px;">Irradiance</div>
<div class="t" style="right:264.0px;top:548.6px;color:#d6d6d6;letter-spacing:-0.30px;">Irradiance Color</div>
<div class="t" style="right:264.0px;top:581.9px;color:#eaeaea;letter-spacing:-0.43px;">Mi Scatter Radius</div>
<div class="t" style="left:1520.6px;top:582.9px;color:#eeeeee;letter-spacing:-0.33px;">0.000</div>
<div class="t" style="right:264.0px;top:604.2px;color:#8b8b8b;letter-spacing:-0.35px;">Mi Scatter Color</div>
<div class="t" style="right:264.0px;top:627.7px;color:#8b8b8b;letter-spacing:-0.36px;">Mi Scatter Accuracy</div>
<div class="t" style="left:1520.6px;top:629px;color:#777;letter-spacing:-0.75px;">97</div>
<div class="t" style="right:262.6px;top:651.7px;color:#8b8b8b;letter-spacing:-0.25px;">Mi Scatter Falloff</div>
<div class="t" style="left:1520.3px;top:652.0999999999999px;color:#8e8e8e;letter-spacing:-0.47px;">None</div>
<div class="t" style="right:262.6px;top:675.8px;color:#8b8b8b;letter-spacing:-0.35px;">Mi Scatter Limit</div>
<div class="t" style="left:1520.6px;top:677px;color:#777;">1</div>
<div class="t" style="right:264.0px;top:700px;color:#8b8b8b;letter-spacing:-0.40px;">Mi Scatter Cache</div>
<div class="t" style="left:1520.6px;top:701px;color:#777;">0</div>
<div class="t" style="right:264.0px;top:734px;color:#eaeaea;letter-spacing:-0.35px;">Mi Refraction Blur</div>
<div class="t" style="left:1520.6px;top:735px;color:#eeeeee;letter-spacing:-0.33px;">0.000</div>
<div class="t" style="right:262.6px;top:758.2px;color:#8b8b8b;letter-spacing:-0.41px;">Mi Refraction Blur Limit</div>
<div class="t" style="left:1520.6px;top:759.2px;color:#777;">1</div>
<div class="t" style="right:264.0px;top:782.1px;color:#8b8b8b;letter-spacing:-0.25px;">Refraction Rays</div>
<div class="t" style="left:1520.6px;top:783.2px;color:#777;">1</div>
<div class="t" style="left:1536.4px;top:826.6px;color:#dadada;letter-spacing:-0.47px;">Derive From Maya</div>
<div class="t" style="left:1518px;width:179.5px;text-align:center;top:862.2px;color:#8a8a8a;letter-spacing:-0.49px;">Take Settings From Maya</div>
<div class="t" style="right:261.5px;top:899px;color:#8b8b8b;letter-spacing:-0.05px;">Refractive Index</div>
<div class="t" style="left:1522.3px;top:900px;color:#777;letter-spacing:-0.33px;">1.000</div>
<div class="t" style="left:1536.4px;top:921.5px;color:#8b8b8b;letter-spacing:-0.21px;">Refractions</div>
<div class="t" style="left:1536.4px;top:942.6px;color:#8b8b8b;letter-spacing:-0.55px;">Absorbs</div>
<div class="t" style="right:261.5px;top:965.2px;color:#8b8b8b;letter-spacing:0.00px;">Diffuse</div>
<div class="t" style="left:1522.3px;top:966.2px;color:#777;letter-spacing:-0.33px;">0.800</div>
<div class="t" style="right:261.5px;top:987.9px;color:#8b8b8b;letter-spacing:-0.75px;">Color</div>
<div class="t" style="left:1365.9px;top:1012.8px;color:#e2e2e2;letter-spacing:0.12px;font-weight:bold;white-space:pre;">Notes:  bars_shader</div>
</body></html>
